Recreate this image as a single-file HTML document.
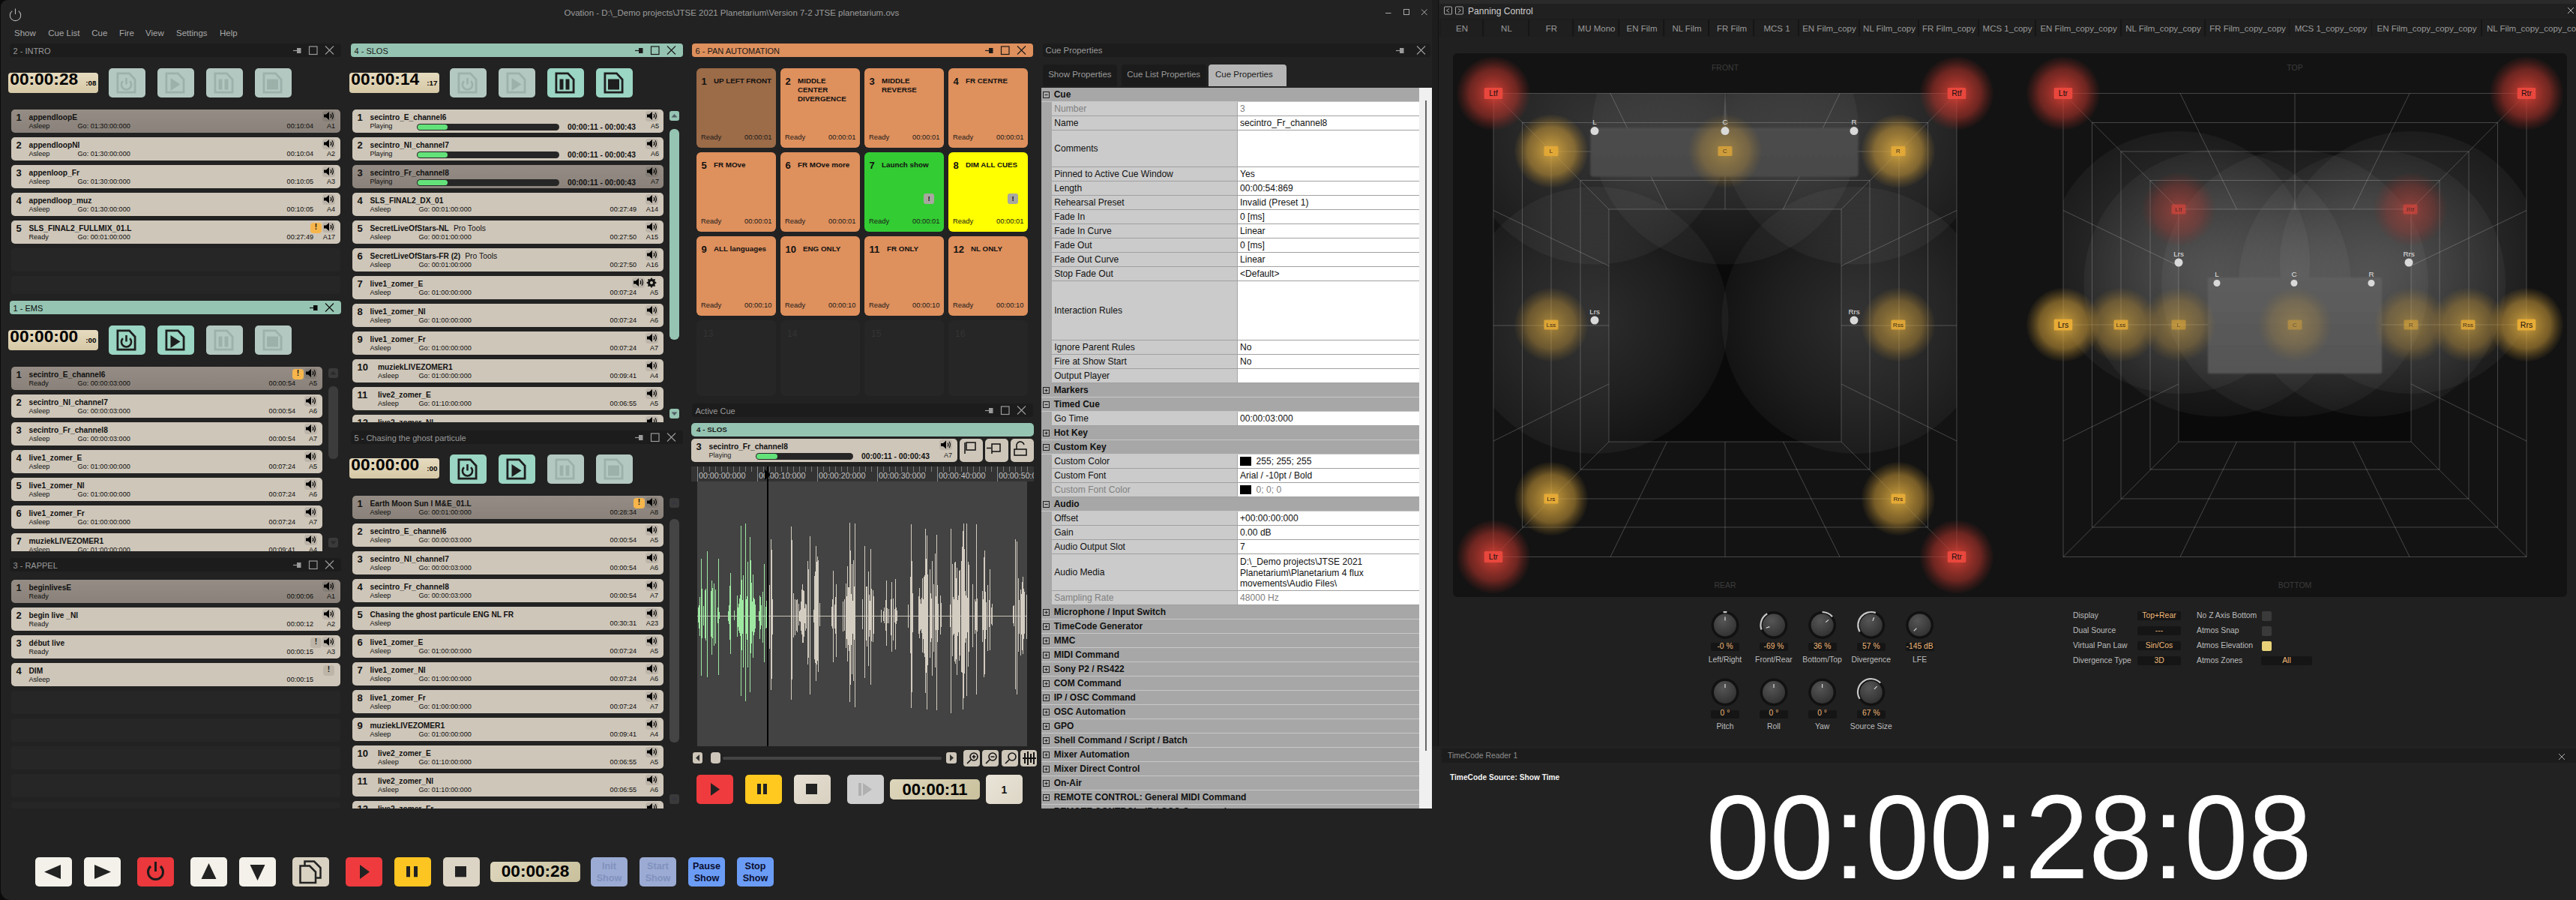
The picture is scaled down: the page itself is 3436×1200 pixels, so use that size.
<!DOCTYPE html><html><head><meta charset="utf-8"><style>
html,body{margin:0;padding:0;}
body{width:3436px;height:1200px;position:relative;overflow:hidden;background:#0b0b0b;font-family:"Liberation Sans",sans-serif;}
div,svg{position:absolute;}
.t{white-space:nowrap;}
</style></head><body>
<div style="left:1px;top:0;width:1918px;height:1200px;background:#222222;border-radius:9px 0 0 13px;"></div>
<div style="left:1910px;top:0;width:1526px;height:1200px;background:#222222;"></div>
<div style="left:1910px;top:0;width:9px;height:995px;background:#1d1d1d;"></div>
<div style="left:1918px;top:0;width:1px;height:995px;background:#121212;"></div>
<div style="left:1919px;top:0;width:1517px;height:995px;background:#202020;"></div>
<div style="left:13px;top:58px;width:442px;height:18px;background:#1c1c1c;border-radius:4px;"></div><div class="t" style="left:17.5px;top:62.8px;line-height:11.00px;font-size:11.00px;color:#9a9a9a;">2 - INTRO</div><div style="left:11px;top:97px;width:120px;height:27px;background:linear-gradient(#e6dbbf,#d5c8a6);border-radius:4px;"></div><div class="t" style="left:13.3px;top:94.1px;line-height:22.70px;font-size:22.70px;font-weight:700;color:#000;">00:00:28</div><div class="t" style="right:3307.5px;top:105.7px;line-height:9.80px;font-size:9.80px;font-weight:700;color:#000;">:08</div><div style="left:145px;top:91px;width:49px;height:39px;background:#b4c8c2;border-radius:5px;"></div><div style="left:210px;top:91px;width:49px;height:39px;background:#b4c8c2;border-radius:5px;"></div><div style="left:275px;top:91px;width:49px;height:39px;background:#b4c8c2;border-radius:5px;"></div><div style="left:340px;top:91px;width:49px;height:39px;background:#b4c8c2;border-radius:5px;"></div><div style="left:15px;top:146px;width:439px;height:31px;background:linear-gradient(#958d85,#8a827a);border-radius:5px;"></div><div class="t" style="left:21.5px;top:149.9px;line-height:13.00px;font-size:13.00px;font-weight:700;color:#111;">1</div><div class="t" style="left:38.5px;top:151.8px;line-height:10.20px;font-size:10.20px;font-weight:700;color:#111;">appendloopE</div><div class="t" style="left:38.5px;top:164.3px;line-height:9.10px;font-size:9.10px;color:#0c0c0c;">Asleep</div><div class="t" style="left:103.5px;top:164.3px;line-height:9.10px;font-size:9.10px;color:#0c0c0c;">Go: 01:30:00:000</div><div class="t" style="right:3018.0px;top:164.3px;line-height:9.10px;font-size:9.10px;color:#0c0c0c;">00:10:04</div><div class="t" style="right:2989.0px;top:164.3px;line-height:9.10px;font-size:9.10px;color:#0c0c0c;">A1</div><div style="left:430px;top:147.5px;width:17px;height:14px;background:rgba(0,0,0,0.085);border-radius:4px;"></div><div style="left:15px;top:183px;width:439px;height:31px;background:#cec6b9;border-radius:5px;"></div><div class="t" style="left:21.5px;top:186.9px;line-height:13.00px;font-size:13.00px;font-weight:700;color:#111;">2</div><div class="t" style="left:38.5px;top:188.8px;line-height:10.20px;font-size:10.20px;font-weight:700;color:#111;">appendloopNl</div><div class="t" style="left:38.5px;top:201.3px;line-height:9.10px;font-size:9.10px;color:#0c0c0c;">Asleep</div><div class="t" style="left:103.5px;top:201.3px;line-height:9.10px;font-size:9.10px;color:#0c0c0c;">Go: 01:30:00:000</div><div class="t" style="right:3018.0px;top:201.3px;line-height:9.10px;font-size:9.10px;color:#0c0c0c;">00:10:04</div><div class="t" style="right:2989.0px;top:201.3px;line-height:9.10px;font-size:9.10px;color:#0c0c0c;">A2</div><div style="left:430px;top:184.5px;width:17px;height:14px;background:rgba(0,0,0,0.085);border-radius:4px;"></div><div style="left:15px;top:220px;width:439px;height:31px;background:#cec6b9;border-radius:5px;"></div><div class="t" style="left:21.5px;top:223.9px;line-height:13.00px;font-size:13.00px;font-weight:700;color:#111;">3</div><div class="t" style="left:38.5px;top:225.8px;line-height:10.20px;font-size:10.20px;font-weight:700;color:#111;">appenloop_Fr</div><div class="t" style="left:38.5px;top:238.3px;line-height:9.10px;font-size:9.10px;color:#0c0c0c;">Asleep</div><div class="t" style="left:103.5px;top:238.3px;line-height:9.10px;font-size:9.10px;color:#0c0c0c;">Go: 01:30:00:000</div><div class="t" style="right:3018.0px;top:238.3px;line-height:9.10px;font-size:9.10px;color:#0c0c0c;">00:10:05</div><div class="t" style="right:2989.0px;top:238.3px;line-height:9.10px;font-size:9.10px;color:#0c0c0c;">A3</div><div style="left:430px;top:221.5px;width:17px;height:14px;background:rgba(0,0,0,0.085);border-radius:4px;"></div><div style="left:15px;top:257px;width:439px;height:31px;background:#cec6b9;border-radius:5px;"></div><div class="t" style="left:21.5px;top:260.9px;line-height:13.00px;font-size:13.00px;font-weight:700;color:#111;">4</div><div class="t" style="left:38.5px;top:262.8px;line-height:10.20px;font-size:10.20px;font-weight:700;color:#111;">appendloop_muz</div><div class="t" style="left:38.5px;top:275.3px;line-height:9.10px;font-size:9.10px;color:#0c0c0c;">Asleep</div><div class="t" style="left:103.5px;top:275.3px;line-height:9.10px;font-size:9.10px;color:#0c0c0c;">Go: 01:30:00:000</div><div class="t" style="right:3018.0px;top:275.3px;line-height:9.10px;font-size:9.10px;color:#0c0c0c;">00:10:05</div><div class="t" style="right:2989.0px;top:275.3px;line-height:9.10px;font-size:9.10px;color:#0c0c0c;">A4</div><div style="left:430px;top:258.5px;width:17px;height:14px;background:rgba(0,0,0,0.085);border-radius:4px;"></div><div style="left:15px;top:294px;width:439px;height:31px;background:#cec6b9;border-radius:5px;"></div><div class="t" style="left:21.5px;top:297.9px;line-height:13.00px;font-size:13.00px;font-weight:700;color:#111;">5</div><div class="t" style="left:38.5px;top:299.8px;line-height:10.20px;font-size:10.20px;font-weight:700;color:#111;">SLS_FINAL2_FULLMIX_01.L</div><div class="t" style="left:38.5px;top:312.3px;line-height:9.10px;font-size:9.10px;color:#0c0c0c;">Ready</div><div class="t" style="left:103.5px;top:312.3px;line-height:9.10px;font-size:9.10px;color:#0c0c0c;">Go: 00:01:00:000</div><div class="t" style="right:3018.0px;top:312.3px;line-height:9.10px;font-size:9.10px;color:#0c0c0c;">00:27:49</div><div class="t" style="right:2989.0px;top:312.3px;line-height:9.10px;font-size:9.10px;color:#0c0c0c;">A17</div><div style="left:430px;top:295.5px;width:17px;height:14px;background:rgba(0,0,0,0.085);border-radius:4px;"></div><div style="left:414px;top:296.5px;width:15px;height:14px;background:#f7b64c;border-radius:4px;"></div><div class="t" style="left:419.8px;top:298.1px;line-height:10.00px;font-size:10.00px;font-weight:700;color:#111;">!</div><div style="left:15px;top:331px;width:439px;height:31px;background:#262626;border-radius:4px;"></div><div style="left:15px;top:368px;width:439px;height:24px;background:#262626;border-radius:4px;"></div><div style="left:13px;top:401px;width:442px;height:18px;background:#95c4b2;border-radius:4px;"></div><div class="t" style="left:17.5px;top:405.8px;line-height:11.00px;font-size:11.00px;color:#0c0c0c;">1 - EMS</div><div style="left:11px;top:440px;width:120px;height:27px;background:linear-gradient(#e6dbbf,#d5c8a6);border-radius:4px;"></div><div class="t" style="left:13.3px;top:437.1px;line-height:22.70px;font-size:22.70px;font-weight:700;color:#000;">00:00:00</div><div class="t" style="right:3307.5px;top:448.7px;line-height:9.80px;font-size:9.80px;font-weight:700;color:#000;">:00</div><div style="left:145px;top:434px;width:49px;height:39px;background:#9bd5c3;border-radius:5px;"></div><div style="left:210px;top:434px;width:49px;height:39px;background:#9bd5c3;border-radius:5px;"></div><div style="left:275px;top:434px;width:49px;height:39px;background:#b4c8c2;border-radius:5px;"></div><div style="left:340px;top:434px;width:49px;height:39px;background:#b4c8c2;border-radius:5px;"></div><div style="left:0;top:0;width:3436px;height:1200px;clip-path:inset(480px 2976px 465px 0px);"><div style="left:15px;top:489px;width:415px;height:31px;background:linear-gradient(#958d85,#8a827a);border-radius:5px;"></div><div class="t" style="left:21.5px;top:492.9px;line-height:13.00px;font-size:13.00px;font-weight:700;color:#111;">1</div><div class="t" style="left:38.5px;top:494.8px;line-height:10.20px;font-size:10.20px;font-weight:700;color:#111;">secintro_E_channel6</div><div class="t" style="left:38.5px;top:507.3px;line-height:9.10px;font-size:9.10px;color:#0c0c0c;">Ready</div><div class="t" style="left:103.5px;top:507.3px;line-height:9.10px;font-size:9.10px;color:#0c0c0c;">Go: 00:00:03:000</div><div class="t" style="right:3042.0px;top:507.3px;line-height:9.10px;font-size:9.10px;color:#0c0c0c;">00:00:54</div><div class="t" style="right:3013.0px;top:507.3px;line-height:9.10px;font-size:9.10px;color:#0c0c0c;">A5</div><div style="left:406px;top:490.5px;width:17px;height:14px;background:rgba(0,0,0,0.085);border-radius:4px;"></div><div style="left:390px;top:491.5px;width:15px;height:14px;background:#f7b64c;border-radius:4px;"></div><div class="t" style="left:395.8px;top:493.1px;line-height:10.00px;font-size:10.00px;font-weight:700;color:#111;">!</div><div style="left:15px;top:526px;width:415px;height:31px;background:#cec6b9;border-radius:5px;"></div><div class="t" style="left:21.5px;top:529.9px;line-height:13.00px;font-size:13.00px;font-weight:700;color:#111;">2</div><div class="t" style="left:38.5px;top:531.8px;line-height:10.20px;font-size:10.20px;font-weight:700;color:#111;">secintro_Nl_channel7</div><div class="t" style="left:38.5px;top:544.3px;line-height:9.10px;font-size:9.10px;color:#0c0c0c;">Asleep</div><div class="t" style="left:103.5px;top:544.3px;line-height:9.10px;font-size:9.10px;color:#0c0c0c;">Go: 00:00:03:000</div><div class="t" style="right:3042.0px;top:544.3px;line-height:9.10px;font-size:9.10px;color:#0c0c0c;">00:00:54</div><div class="t" style="right:3013.0px;top:544.3px;line-height:9.10px;font-size:9.10px;color:#0c0c0c;">A6</div><div style="left:406px;top:527.5px;width:17px;height:14px;background:rgba(0,0,0,0.085);border-radius:4px;"></div><div style="left:15px;top:563px;width:415px;height:31px;background:#cec6b9;border-radius:5px;"></div><div class="t" style="left:21.5px;top:566.9px;line-height:13.00px;font-size:13.00px;font-weight:700;color:#111;">3</div><div class="t" style="left:38.5px;top:568.8px;line-height:10.20px;font-size:10.20px;font-weight:700;color:#111;">secintro_Fr_channel8</div><div class="t" style="left:38.5px;top:581.3px;line-height:9.10px;font-size:9.10px;color:#0c0c0c;">Asleep</div><div class="t" style="left:103.5px;top:581.3px;line-height:9.10px;font-size:9.10px;color:#0c0c0c;">Go: 00:00:03:000</div><div class="t" style="right:3042.0px;top:581.3px;line-height:9.10px;font-size:9.10px;color:#0c0c0c;">00:00:54</div><div class="t" style="right:3013.0px;top:581.3px;line-height:9.10px;font-size:9.10px;color:#0c0c0c;">A7</div><div style="left:406px;top:564.5px;width:17px;height:14px;background:rgba(0,0,0,0.085);border-radius:4px;"></div><div style="left:15px;top:600px;width:415px;height:31px;background:#cec6b9;border-radius:5px;"></div><div class="t" style="left:21.5px;top:603.9px;line-height:13.00px;font-size:13.00px;font-weight:700;color:#111;">4</div><div class="t" style="left:38.5px;top:605.8px;line-height:10.20px;font-size:10.20px;font-weight:700;color:#111;">live1_zomer_E</div><div class="t" style="left:38.5px;top:618.3px;line-height:9.10px;font-size:9.10px;color:#0c0c0c;">Asleep</div><div class="t" style="left:103.5px;top:618.3px;line-height:9.10px;font-size:9.10px;color:#0c0c0c;">Go: 01:00:00:000</div><div class="t" style="right:3042.0px;top:618.3px;line-height:9.10px;font-size:9.10px;color:#0c0c0c;">00:07:24</div><div class="t" style="right:3013.0px;top:618.3px;line-height:9.10px;font-size:9.10px;color:#0c0c0c;">A5</div><div style="left:406px;top:601.5px;width:17px;height:14px;background:rgba(0,0,0,0.085);border-radius:4px;"></div><div style="left:15px;top:637px;width:415px;height:31px;background:#cec6b9;border-radius:5px;"></div><div class="t" style="left:21.5px;top:640.9px;line-height:13.00px;font-size:13.00px;font-weight:700;color:#111;">5</div><div class="t" style="left:38.5px;top:642.8px;line-height:10.20px;font-size:10.20px;font-weight:700;color:#111;">live1_zomer_Nl</div><div class="t" style="left:38.5px;top:655.3px;line-height:9.10px;font-size:9.10px;color:#0c0c0c;">Asleep</div><div class="t" style="left:103.5px;top:655.3px;line-height:9.10px;font-size:9.10px;color:#0c0c0c;">Go: 01:00:00:000</div><div class="t" style="right:3042.0px;top:655.3px;line-height:9.10px;font-size:9.10px;color:#0c0c0c;">00:07:24</div><div class="t" style="right:3013.0px;top:655.3px;line-height:9.10px;font-size:9.10px;color:#0c0c0c;">A6</div><div style="left:406px;top:638.5px;width:17px;height:14px;background:rgba(0,0,0,0.085);border-radius:4px;"></div><div style="left:15px;top:674px;width:415px;height:31px;background:#cec6b9;border-radius:5px;"></div><div class="t" style="left:21.5px;top:677.9px;line-height:13.00px;font-size:13.00px;font-weight:700;color:#111;">6</div><div class="t" style="left:38.5px;top:679.8px;line-height:10.20px;font-size:10.20px;font-weight:700;color:#111;">live1_zomer_Fr</div><div class="t" style="left:38.5px;top:692.3px;line-height:9.10px;font-size:9.10px;color:#0c0c0c;">Asleep</div><div class="t" style="left:103.5px;top:692.3px;line-height:9.10px;font-size:9.10px;color:#0c0c0c;">Go: 01:00:00:000</div><div class="t" style="right:3042.0px;top:692.3px;line-height:9.10px;font-size:9.10px;color:#0c0c0c;">00:07:24</div><div class="t" style="right:3013.0px;top:692.3px;line-height:9.10px;font-size:9.10px;color:#0c0c0c;">A7</div><div style="left:406px;top:675.5px;width:17px;height:14px;background:rgba(0,0,0,0.085);border-radius:4px;"></div><div style="left:15px;top:711px;width:415px;height:24px;background:#cec6b9;border-radius:5px 5px 0 0;"></div><div class="t" style="left:21.5px;top:714.9px;line-height:13.00px;font-size:13.00px;font-weight:700;color:#111;">7</div><div class="t" style="left:38.5px;top:716.8px;line-height:10.20px;font-size:10.20px;font-weight:700;color:#111;">muziekLIVEZOMER1</div><div class="t" style="left:38.5px;top:729.3px;line-height:9.10px;font-size:9.10px;color:#0c0c0c;">Asleep</div><div class="t" style="left:103.5px;top:729.3px;line-height:9.10px;font-size:9.10px;color:#0c0c0c;">Go: 01:00:00:000</div><div class="t" style="right:3042.0px;top:729.3px;line-height:9.10px;font-size:9.10px;color:#0c0c0c;">00:09:41</div><div class="t" style="right:3013.0px;top:729.3px;line-height:9.10px;font-size:9.10px;color:#0c0c0c;">A4</div><div style="left:406px;top:712.5px;width:17px;height:14px;background:rgba(0,0,0,0.085);border-radius:4px;"></div></div><div style="left:438px;top:491px;width:13px;height:13px;background:#3a3a3a;border-radius:3px;"></div><div style="left:438px;top:717px;width:13px;height:13px;background:#3a3a3a;border-radius:3px;"></div><div style="left:438px;top:515px;width:13px;height:97px;background:#3c3c3c;border-radius:6px;"></div><div style="left:13px;top:744px;width:442px;height:18px;background:#1c1c1c;border-radius:4px;"></div><div class="t" style="left:17.5px;top:748.8px;line-height:11.00px;font-size:11.00px;color:#9a9a9a;">3 - RAPPEL</div><div style="left:15px;top:773px;width:439px;height:31px;background:linear-gradient(#958d85,#8a827a);border-radius:5px;"></div><div class="t" style="left:21.5px;top:776.9px;line-height:13.00px;font-size:13.00px;font-weight:700;color:#111;">1</div><div class="t" style="left:38.5px;top:778.8px;line-height:10.20px;font-size:10.20px;font-weight:700;color:#111;">beginlivesE</div><div class="t" style="left:38.5px;top:791.3px;line-height:9.10px;font-size:9.10px;color:#0c0c0c;">Ready</div><div class="t" style="right:3018.0px;top:791.3px;line-height:9.10px;font-size:9.10px;color:#0c0c0c;">00:00:06</div><div class="t" style="right:2989.0px;top:791.3px;line-height:9.10px;font-size:9.10px;color:#0c0c0c;">A1</div><div style="left:430px;top:774.5px;width:17px;height:14px;background:rgba(0,0,0,0.085);border-radius:4px;"></div><div style="left:15px;top:810px;width:439px;height:31px;background:#cec6b9;border-radius:5px;"></div><div class="t" style="left:21.5px;top:813.9px;line-height:13.00px;font-size:13.00px;font-weight:700;color:#111;">2</div><div class="t" style="left:38.5px;top:815.8px;line-height:10.20px;font-size:10.20px;font-weight:700;color:#111;">begin live _Nl</div><div class="t" style="left:38.5px;top:828.3px;line-height:9.10px;font-size:9.10px;color:#0c0c0c;">Ready</div><div class="t" style="right:3018.0px;top:828.3px;line-height:9.10px;font-size:9.10px;color:#0c0c0c;">00:00:12</div><div class="t" style="right:2989.0px;top:828.3px;line-height:9.10px;font-size:9.10px;color:#0c0c0c;">A2</div><div style="left:430px;top:811.5px;width:17px;height:14px;background:rgba(0,0,0,0.085);border-radius:4px;"></div><div style="left:15px;top:847px;width:439px;height:31px;background:#cec6b9;border-radius:5px;"></div><div class="t" style="left:21.5px;top:850.9px;line-height:13.00px;font-size:13.00px;font-weight:700;color:#111;">3</div><div class="t" style="left:38.5px;top:852.8px;line-height:10.20px;font-size:10.20px;font-weight:700;color:#111;">début live</div><div class="t" style="left:38.5px;top:865.3px;line-height:9.10px;font-size:9.10px;color:#0c0c0c;">Ready</div><div class="t" style="right:3018.0px;top:865.3px;line-height:9.10px;font-size:9.10px;color:#0c0c0c;">00:00:15</div><div class="t" style="right:2989.0px;top:865.3px;line-height:9.10px;font-size:9.10px;color:#0c0c0c;">A3</div><div style="left:430px;top:848.5px;width:17px;height:14px;background:rgba(0,0,0,0.085);border-radius:4px;"></div><div style="left:414px;top:849.5px;width:15px;height:14px;background:#bdb5a8;border-radius:4px;"></div><div class="t" style="left:419.8px;top:851.1px;line-height:10.00px;font-size:10.00px;font-weight:700;color:#111;">!</div><div style="left:15px;top:884px;width:439px;height:31px;background:#cec6b9;border-radius:5px;"></div><div class="t" style="left:21.5px;top:887.9px;line-height:13.00px;font-size:13.00px;font-weight:700;color:#111;">4</div><div class="t" style="left:38.5px;top:889.8px;line-height:10.20px;font-size:10.20px;font-weight:700;color:#111;">DIM</div><div class="t" style="left:38.5px;top:902.3px;line-height:9.10px;font-size:9.10px;color:#0c0c0c;">Asleep</div><div class="t" style="right:3018.0px;top:902.3px;line-height:9.10px;font-size:9.10px;color:#0c0c0c;">00:00:15</div><div class="t" style="right:2989.0px;top:902.3px;line-height:9.10px;font-size:9.10px;color:#0c0c0c;"></div><div style="left:431px;top:886.5px;width:15px;height:14px;background:#bdb5a8;border-radius:4px;"></div><div class="t" style="left:436.8px;top:888.1px;line-height:10.00px;font-size:10.00px;font-weight:700;color:#111;">!</div><div style="left:15px;top:921px;width:439px;height:31px;background:#262626;border-radius:4px;"></div><div style="left:15px;top:958px;width:439px;height:31px;background:#262626;border-radius:4px;"></div><div style="left:15px;top:995px;width:439px;height:31px;background:#262626;border-radius:4px;"></div><div style="left:15px;top:1032px;width:439px;height:31px;background:#262626;border-radius:4px;"></div><div style="left:15px;top:1069px;width:439px;height:9px;background:#262626;border-radius:4px;"></div><div style="left:468px;top:58px;width:443px;height:18px;background:#95c4b2;border-radius:4px;"></div><div class="t" style="left:472.5px;top:62.8px;line-height:11.00px;font-size:11.00px;color:#1a1a1a;">4 - SLOS</div><div style="left:466px;top:97px;width:120px;height:27px;background:linear-gradient(#e6dbbf,#d5c8a6);border-radius:4px;"></div><div class="t" style="left:468.3px;top:94.1px;line-height:22.70px;font-size:22.70px;font-weight:700;color:#000;">00:00:14</div><div class="t" style="right:2852.5px;top:105.7px;line-height:9.80px;font-size:9.80px;font-weight:700;color:#000;">:17</div><div style="left:600px;top:91px;width:49px;height:39px;background:#b4c8c2;border-radius:5px;"></div><div style="left:665px;top:91px;width:49px;height:39px;background:#b4c8c2;border-radius:5px;"></div><div style="left:730px;top:91px;width:49px;height:39px;background:#9bd5c3;border-radius:5px;"></div><div style="left:795px;top:91px;width:49px;height:39px;background:#9bd5c3;border-radius:5px;"></div><div style="left:0;top:0;width:3436px;height:1200px;clip-path:inset(140px 2544px 637px 460px);"><div style="left:470px;top:146px;width:415px;height:31px;background:#cec6b9;border-radius:5px;"></div><div class="t" style="left:476.5px;top:149.9px;line-height:13.00px;font-size:13.00px;font-weight:700;color:#111;">1</div><div class="t" style="left:493.5px;top:151.8px;line-height:10.20px;font-size:10.20px;font-weight:700;color:#111;">secintro_E_channel6</div><div class="t" style="left:493.5px;top:164.3px;line-height:9.10px;font-size:9.10px;color:#0c0c0c;">Playing</div><div style="left:556px;top:164.5px;width:190px;height:9.5px;background:#262626;border-radius:5px;"></div><div style="left:557px;top:165.5px;width:40px;height:7.5px;background:#63e27a;border-radius:4px;"></div><div class="t" style="right:2588.0px;top:165.0px;line-height:10.30px;font-size:10.30px;font-weight:700;color:#111;">00:00:11 - 00:00:43</div><div class="t" style="right:2557.0px;top:163.6px;line-height:9.00px;font-size:9.00px;color:#0c0c0c;">A5</div><div style="left:861px;top:147.5px;width:17px;height:14px;background:rgba(0,0,0,0.085);border-radius:4px;"></div><div style="left:470px;top:183px;width:415px;height:31px;background:#cec6b9;border-radius:5px;"></div><div class="t" style="left:476.5px;top:186.9px;line-height:13.00px;font-size:13.00px;font-weight:700;color:#111;">2</div><div class="t" style="left:493.5px;top:188.8px;line-height:10.20px;font-size:10.20px;font-weight:700;color:#111;">secintro_Nl_channel7</div><div class="t" style="left:493.5px;top:201.3px;line-height:9.10px;font-size:9.10px;color:#0c0c0c;">Playing</div><div style="left:556px;top:201.5px;width:190px;height:9.5px;background:#262626;border-radius:5px;"></div><div style="left:557px;top:202.5px;width:40px;height:7.5px;background:#63e27a;border-radius:4px;"></div><div class="t" style="right:2588.0px;top:202.0px;line-height:10.30px;font-size:10.30px;font-weight:700;color:#111;">00:00:11 - 00:00:43</div><div class="t" style="right:2557.0px;top:200.6px;line-height:9.00px;font-size:9.00px;color:#0c0c0c;">A6</div><div style="left:861px;top:184.5px;width:17px;height:14px;background:rgba(0,0,0,0.085);border-radius:4px;"></div><div style="left:470px;top:220px;width:415px;height:31px;background:linear-gradient(#958d85,#8a827a);border-radius:5px;"></div><div class="t" style="left:476.5px;top:223.9px;line-height:13.00px;font-size:13.00px;font-weight:700;color:#111;">3</div><div class="t" style="left:493.5px;top:225.8px;line-height:10.20px;font-size:10.20px;font-weight:700;color:#111;">secintro_Fr_channel8</div><div class="t" style="left:493.5px;top:238.3px;line-height:9.10px;font-size:9.10px;color:#0c0c0c;">Playing</div><div style="left:556px;top:238.5px;width:190px;height:9.5px;background:#262626;border-radius:5px;"></div><div style="left:557px;top:239.5px;width:40px;height:7.5px;background:#63e27a;border-radius:4px;"></div><div class="t" style="right:2588.0px;top:239.0px;line-height:10.30px;font-size:10.30px;font-weight:700;color:#111;">00:00:11 - 00:00:43</div><div class="t" style="right:2557.0px;top:237.6px;line-height:9.00px;font-size:9.00px;color:#0c0c0c;">A7</div><div style="left:861px;top:221.5px;width:17px;height:14px;background:rgba(0,0,0,0.085);border-radius:4px;"></div><div style="left:470px;top:257px;width:415px;height:31px;background:#cec6b9;border-radius:5px;"></div><div class="t" style="left:476.5px;top:260.9px;line-height:13.00px;font-size:13.00px;font-weight:700;color:#111;">4</div><div class="t" style="left:493.5px;top:262.8px;line-height:10.20px;font-size:10.20px;font-weight:700;color:#111;">SLS_FINAL2_DX_01</div><div class="t" style="left:493.5px;top:275.3px;line-height:9.10px;font-size:9.10px;color:#0c0c0c;">Asleep</div><div class="t" style="left:558.5px;top:275.3px;line-height:9.10px;font-size:9.10px;color:#0c0c0c;">Go: 00:01:00:000</div><div class="t" style="right:2587.0px;top:275.3px;line-height:9.10px;font-size:9.10px;color:#0c0c0c;">00:27:49</div><div class="t" style="right:2558.0px;top:275.3px;line-height:9.10px;font-size:9.10px;color:#0c0c0c;">A14</div><div style="left:861px;top:258.5px;width:17px;height:14px;background:rgba(0,0,0,0.085);border-radius:4px;"></div><div style="left:470px;top:294px;width:415px;height:31px;background:#cec6b9;border-radius:5px;"></div><div class="t" style="left:476.5px;top:297.9px;line-height:13.00px;font-size:13.00px;font-weight:700;color:#111;">5</div><div class="t" style="left:493.5px;top:299.8px;line-height:10.20px;font-size:10.20px;font-weight:700;color:#111;">SecretLiveOfStars-NL</div><div class="t" style="left:604.9px;top:299.7px;line-height:10.40px;font-size:10.40px;color:#111;">Pro Tools</div><div class="t" style="left:493.5px;top:312.3px;line-height:9.10px;font-size:9.10px;color:#0c0c0c;">Asleep</div><div class="t" style="left:558.5px;top:312.3px;line-height:9.10px;font-size:9.10px;color:#0c0c0c;">Go: 00:01:00:000</div><div class="t" style="right:2587.0px;top:312.3px;line-height:9.10px;font-size:9.10px;color:#0c0c0c;">00:27:50</div><div class="t" style="right:2558.0px;top:312.3px;line-height:9.10px;font-size:9.10px;color:#0c0c0c;">A15</div><div style="left:861px;top:295.5px;width:17px;height:14px;background:rgba(0,0,0,0.085);border-radius:4px;"></div><div style="left:470px;top:331px;width:415px;height:31px;background:#cec6b9;border-radius:5px;"></div><div class="t" style="left:476.5px;top:334.9px;line-height:13.00px;font-size:13.00px;font-weight:700;color:#111;">6</div><div class="t" style="left:493.5px;top:336.8px;line-height:10.20px;font-size:10.20px;font-weight:700;color:#111;">SecretLiveOfStars-FR (2)</div><div class="t" style="left:620.2px;top:336.7px;line-height:10.40px;font-size:10.40px;color:#111;">Pro Tools</div><div class="t" style="left:493.5px;top:349.3px;line-height:9.10px;font-size:9.10px;color:#0c0c0c;">Asleep</div><div class="t" style="left:558.5px;top:349.3px;line-height:9.10px;font-size:9.10px;color:#0c0c0c;">Go: 00:01:00:000</div><div class="t" style="right:2587.0px;top:349.3px;line-height:9.10px;font-size:9.10px;color:#0c0c0c;">00:27:50</div><div class="t" style="right:2558.0px;top:349.3px;line-height:9.10px;font-size:9.10px;color:#0c0c0c;">A16</div><div style="left:861px;top:332.5px;width:17px;height:14px;background:rgba(0,0,0,0.085);border-radius:4px;"></div><div style="left:470px;top:368px;width:415px;height:31px;background:#cec6b9;border-radius:5px;"></div><div class="t" style="left:476.5px;top:371.9px;line-height:13.00px;font-size:13.00px;font-weight:700;color:#111;">7</div><div class="t" style="left:493.5px;top:373.8px;line-height:10.20px;font-size:10.20px;font-weight:700;color:#111;">live1_zomer_E</div><div class="t" style="left:493.5px;top:386.3px;line-height:9.10px;font-size:9.10px;color:#0c0c0c;">Asleep</div><div class="t" style="left:558.5px;top:386.3px;line-height:9.10px;font-size:9.10px;color:#0c0c0c;">Go: 01:00:00:000</div><div class="t" style="right:2587.0px;top:386.3px;line-height:9.10px;font-size:9.10px;color:#0c0c0c;">00:07:24</div><div class="t" style="right:2558.0px;top:386.3px;line-height:9.10px;font-size:9.10px;color:#0c0c0c;">A5</div><div style="left:843px;top:369.5px;width:17px;height:14px;background:rgba(0,0,0,0.085);border-radius:4px;"></div><div style="left:470px;top:405px;width:415px;height:31px;background:#cec6b9;border-radius:5px;"></div><div class="t" style="left:476.5px;top:408.9px;line-height:13.00px;font-size:13.00px;font-weight:700;color:#111;">8</div><div class="t" style="left:493.5px;top:410.8px;line-height:10.20px;font-size:10.20px;font-weight:700;color:#111;">live1_zomer_Nl</div><div class="t" style="left:493.5px;top:423.3px;line-height:9.10px;font-size:9.10px;color:#0c0c0c;">Asleep</div><div class="t" style="left:558.5px;top:423.3px;line-height:9.10px;font-size:9.10px;color:#0c0c0c;">Go: 01:00:00:000</div><div class="t" style="right:2587.0px;top:423.3px;line-height:9.10px;font-size:9.10px;color:#0c0c0c;">00:07:24</div><div class="t" style="right:2558.0px;top:423.3px;line-height:9.10px;font-size:9.10px;color:#0c0c0c;">A6</div><div style="left:861px;top:406.5px;width:17px;height:14px;background:rgba(0,0,0,0.085);border-radius:4px;"></div><div style="left:470px;top:442px;width:415px;height:31px;background:#cec6b9;border-radius:5px;"></div><div class="t" style="left:476.5px;top:445.9px;line-height:13.00px;font-size:13.00px;font-weight:700;color:#111;">9</div><div class="t" style="left:493.5px;top:447.8px;line-height:10.20px;font-size:10.20px;font-weight:700;color:#111;">live1_zomer_Fr</div><div class="t" style="left:493.5px;top:460.3px;line-height:9.10px;font-size:9.10px;color:#0c0c0c;">Asleep</div><div class="t" style="left:558.5px;top:460.3px;line-height:9.10px;font-size:9.10px;color:#0c0c0c;">Go: 01:00:00:000</div><div class="t" style="right:2587.0px;top:460.3px;line-height:9.10px;font-size:9.10px;color:#0c0c0c;">00:07:24</div><div class="t" style="right:2558.0px;top:460.3px;line-height:9.10px;font-size:9.10px;color:#0c0c0c;">A7</div><div style="left:861px;top:443.5px;width:17px;height:14px;background:rgba(0,0,0,0.085);border-radius:4px;"></div><div style="left:470px;top:479px;width:415px;height:31px;background:#cec6b9;border-radius:5px;"></div><div class="t" style="left:476.5px;top:482.9px;line-height:13.00px;font-size:13.00px;font-weight:700;color:#111;">10</div><div class="t" style="left:504.0px;top:484.8px;line-height:10.20px;font-size:10.20px;font-weight:700;color:#111;">muziekLIVEZOMER1</div><div class="t" style="left:504.0px;top:497.3px;line-height:9.10px;font-size:9.10px;color:#0c0c0c;">Asleep</div><div class="t" style="left:558.5px;top:497.3px;line-height:9.10px;font-size:9.10px;color:#0c0c0c;">Go: 01:00:00:000</div><div class="t" style="right:2587.0px;top:497.3px;line-height:9.10px;font-size:9.10px;color:#0c0c0c;">00:09:41</div><div class="t" style="right:2558.0px;top:497.3px;line-height:9.10px;font-size:9.10px;color:#0c0c0c;">A4</div><div style="left:861px;top:480.5px;width:17px;height:14px;background:rgba(0,0,0,0.085);border-radius:4px;"></div><div style="left:470px;top:516px;width:415px;height:31px;background:#cec6b9;border-radius:5px;"></div><div class="t" style="left:476.5px;top:519.9px;line-height:13.00px;font-size:13.00px;font-weight:700;color:#111;">11</div><div class="t" style="left:504.0px;top:521.8px;line-height:10.20px;font-size:10.20px;font-weight:700;color:#111;">live2_zomer_E</div><div class="t" style="left:504.0px;top:534.3px;line-height:9.10px;font-size:9.10px;color:#0c0c0c;">Asleep</div><div class="t" style="left:558.5px;top:534.3px;line-height:9.10px;font-size:9.10px;color:#0c0c0c;">Go: 01:10:00:000</div><div class="t" style="right:2587.0px;top:534.3px;line-height:9.10px;font-size:9.10px;color:#0c0c0c;">00:06:55</div><div class="t" style="right:2558.0px;top:534.3px;line-height:9.10px;font-size:9.10px;color:#0c0c0c;">A5</div><div style="left:861px;top:517.5px;width:17px;height:14px;background:rgba(0,0,0,0.085);border-radius:4px;"></div><div style="left:470px;top:553px;width:415px;height:10px;background:#cec6b9;border-radius:5px 5px 0 0;"></div><div class="t" style="left:476.5px;top:556.9px;line-height:13.00px;font-size:13.00px;font-weight:700;color:#111;">12</div><div class="t" style="left:504.0px;top:558.8px;line-height:10.20px;font-size:10.20px;font-weight:700;color:#111;">live2_zomer_Nl</div><div class="t" style="left:504.0px;top:571.3px;line-height:9.10px;font-size:9.10px;color:#0c0c0c;">Asleep</div><div class="t" style="left:558.5px;top:571.3px;line-height:9.10px;font-size:9.10px;color:#0c0c0c;">Go: 01:10:00:000</div><div class="t" style="right:2587.0px;top:571.3px;line-height:9.10px;font-size:9.10px;color:#0c0c0c;">00:06:55</div><div class="t" style="right:2558.0px;top:571.3px;line-height:9.10px;font-size:9.10px;color:#0c0c0c;">A6</div><div style="left:861px;top:554.5px;width:17px;height:14px;background:rgba(0,0,0,0.085);border-radius:4px;"></div></div><div style="left:893px;top:148px;width:13px;height:13px;background:#95c4b2;border-radius:3px;"></div><div style="left:893px;top:545px;width:13px;height:13px;background:#95c4b2;border-radius:3px;"></div><div style="left:893px;top:172px;width:13px;height:281px;background:#95c4b2;border-radius:6px;"></div><div style="left:468px;top:574px;width:443px;height:18px;background:#1c1c1c;border-radius:4px;"></div><div class="t" style="left:472.5px;top:578.8px;line-height:11.00px;font-size:11.00px;color:#9a9a9a;">5 - Chasing the ghost particule</div><div style="left:466px;top:611px;width:120px;height:27px;background:linear-gradient(#e6dbbf,#d5c8a6);border-radius:4px;"></div><div class="t" style="left:468.3px;top:608.1px;line-height:22.70px;font-size:22.70px;font-weight:700;color:#000;">00:00:00</div><div class="t" style="right:2852.5px;top:619.7px;line-height:9.80px;font-size:9.80px;font-weight:700;color:#000;">:00</div><div style="left:600px;top:606px;width:49px;height:39px;background:#9bd5c3;border-radius:5px;"></div><div style="left:665px;top:606px;width:49px;height:39px;background:#9bd5c3;border-radius:5px;"></div><div style="left:730px;top:606px;width:49px;height:39px;background:#b4c8c2;border-radius:5px;"></div><div style="left:795px;top:606px;width:49px;height:39px;background:#b4c8c2;border-radius:5px;"></div><div style="left:0;top:0;width:3436px;height:1200px;clip-path:inset(650px 2544px 122px 460px);"><div style="left:470px;top:661px;width:415px;height:31px;background:linear-gradient(#958d85,#8a827a);border-radius:5px;"></div><div class="t" style="left:476.5px;top:664.9px;line-height:13.00px;font-size:13.00px;font-weight:700;color:#111;">1</div><div class="t" style="left:493.5px;top:666.8px;line-height:10.20px;font-size:10.20px;font-weight:700;color:#111;">Earth Moon Sun I M&amp;E_01.L</div><div class="t" style="left:493.5px;top:679.3px;line-height:9.10px;font-size:9.10px;color:#0c0c0c;">Asleep</div><div class="t" style="left:558.5px;top:679.3px;line-height:9.10px;font-size:9.10px;color:#0c0c0c;">Go: 00:01:00:000</div><div class="t" style="right:2587.0px;top:679.3px;line-height:9.10px;font-size:9.10px;color:#0c0c0c;">00:28:34</div><div class="t" style="right:2558.0px;top:679.3px;line-height:9.10px;font-size:9.10px;color:#0c0c0c;">A8</div><div style="left:861px;top:662.5px;width:17px;height:14px;background:rgba(0,0,0,0.085);border-radius:4px;"></div><div style="left:845px;top:663.5px;width:15px;height:14px;background:#f7b64c;border-radius:4px;"></div><div class="t" style="left:850.8px;top:665.1px;line-height:10.00px;font-size:10.00px;font-weight:700;color:#111;">!</div><div style="left:470px;top:698px;width:415px;height:31px;background:#cec6b9;border-radius:5px;"></div><div class="t" style="left:476.5px;top:701.9px;line-height:13.00px;font-size:13.00px;font-weight:700;color:#111;">2</div><div class="t" style="left:493.5px;top:703.8px;line-height:10.20px;font-size:10.20px;font-weight:700;color:#111;">secintro_E_channel6</div><div class="t" style="left:493.5px;top:716.3px;line-height:9.10px;font-size:9.10px;color:#0c0c0c;">Asleep</div><div class="t" style="left:558.5px;top:716.3px;line-height:9.10px;font-size:9.10px;color:#0c0c0c;">Go: 00:00:03:000</div><div class="t" style="right:2587.0px;top:716.3px;line-height:9.10px;font-size:9.10px;color:#0c0c0c;">00:00:54</div><div class="t" style="right:2558.0px;top:716.3px;line-height:9.10px;font-size:9.10px;color:#0c0c0c;">A5</div><div style="left:861px;top:699.5px;width:17px;height:14px;background:rgba(0,0,0,0.085);border-radius:4px;"></div><div style="left:470px;top:735px;width:415px;height:31px;background:#cec6b9;border-radius:5px;"></div><div class="t" style="left:476.5px;top:738.9px;line-height:13.00px;font-size:13.00px;font-weight:700;color:#111;">3</div><div class="t" style="left:493.5px;top:740.8px;line-height:10.20px;font-size:10.20px;font-weight:700;color:#111;">secintro_Nl_channel7</div><div class="t" style="left:493.5px;top:753.3px;line-height:9.10px;font-size:9.10px;color:#0c0c0c;">Asleep</div><div class="t" style="left:558.5px;top:753.3px;line-height:9.10px;font-size:9.10px;color:#0c0c0c;">Go: 00:00:03:000</div><div class="t" style="right:2587.0px;top:753.3px;line-height:9.10px;font-size:9.10px;color:#0c0c0c;">00:00:54</div><div class="t" style="right:2558.0px;top:753.3px;line-height:9.10px;font-size:9.10px;color:#0c0c0c;">A6</div><div style="left:861px;top:736.5px;width:17px;height:14px;background:rgba(0,0,0,0.085);border-radius:4px;"></div><div style="left:470px;top:772px;width:415px;height:31px;background:#cec6b9;border-radius:5px;"></div><div class="t" style="left:476.5px;top:775.9px;line-height:13.00px;font-size:13.00px;font-weight:700;color:#111;">4</div><div class="t" style="left:493.5px;top:777.8px;line-height:10.20px;font-size:10.20px;font-weight:700;color:#111;">secintro_Fr_channel8</div><div class="t" style="left:493.5px;top:790.3px;line-height:9.10px;font-size:9.10px;color:#0c0c0c;">Asleep</div><div class="t" style="left:558.5px;top:790.3px;line-height:9.10px;font-size:9.10px;color:#0c0c0c;">Go: 00:00:03:000</div><div class="t" style="right:2587.0px;top:790.3px;line-height:9.10px;font-size:9.10px;color:#0c0c0c;">00:00:54</div><div class="t" style="right:2558.0px;top:790.3px;line-height:9.10px;font-size:9.10px;color:#0c0c0c;">A7</div><div style="left:861px;top:773.5px;width:17px;height:14px;background:rgba(0,0,0,0.085);border-radius:4px;"></div><div style="left:470px;top:809px;width:415px;height:31px;background:#cec6b9;border-radius:5px;"></div><div class="t" style="left:476.5px;top:812.9px;line-height:13.00px;font-size:13.00px;font-weight:700;color:#111;">5</div><div class="t" style="left:493.5px;top:814.8px;line-height:10.20px;font-size:10.20px;font-weight:700;color:#111;">Chasing the ghost particule ENG NL FR</div><div class="t" style="left:493.5px;top:827.3px;line-height:9.10px;font-size:9.10px;color:#0c0c0c;">Asleep</div><div class="t" style="right:2587.0px;top:827.3px;line-height:9.10px;font-size:9.10px;color:#0c0c0c;">00:30:31</div><div class="t" style="right:2558.0px;top:827.3px;line-height:9.10px;font-size:9.10px;color:#0c0c0c;">A23</div><div style="left:861px;top:810.5px;width:17px;height:14px;background:rgba(0,0,0,0.085);border-radius:4px;"></div><div style="left:470px;top:846px;width:415px;height:31px;background:#cec6b9;border-radius:5px;"></div><div class="t" style="left:476.5px;top:849.9px;line-height:13.00px;font-size:13.00px;font-weight:700;color:#111;">6</div><div class="t" style="left:493.5px;top:851.8px;line-height:10.20px;font-size:10.20px;font-weight:700;color:#111;">live1_zomer_E</div><div class="t" style="left:493.5px;top:864.3px;line-height:9.10px;font-size:9.10px;color:#0c0c0c;">Asleep</div><div class="t" style="left:558.5px;top:864.3px;line-height:9.10px;font-size:9.10px;color:#0c0c0c;">Go: 01:00:00:000</div><div class="t" style="right:2587.0px;top:864.3px;line-height:9.10px;font-size:9.10px;color:#0c0c0c;">00:07:24</div><div class="t" style="right:2558.0px;top:864.3px;line-height:9.10px;font-size:9.10px;color:#0c0c0c;">A5</div><div style="left:861px;top:847.5px;width:17px;height:14px;background:rgba(0,0,0,0.085);border-radius:4px;"></div><div style="left:470px;top:883px;width:415px;height:31px;background:#cec6b9;border-radius:5px;"></div><div class="t" style="left:476.5px;top:886.9px;line-height:13.00px;font-size:13.00px;font-weight:700;color:#111;">7</div><div class="t" style="left:493.5px;top:888.8px;line-height:10.20px;font-size:10.20px;font-weight:700;color:#111;">live1_zomer_Nl</div><div class="t" style="left:493.5px;top:901.3px;line-height:9.10px;font-size:9.10px;color:#0c0c0c;">Asleep</div><div class="t" style="left:558.5px;top:901.3px;line-height:9.10px;font-size:9.10px;color:#0c0c0c;">Go: 01:00:00:000</div><div class="t" style="right:2587.0px;top:901.3px;line-height:9.10px;font-size:9.10px;color:#0c0c0c;">00:07:24</div><div class="t" style="right:2558.0px;top:901.3px;line-height:9.10px;font-size:9.10px;color:#0c0c0c;">A6</div><div style="left:861px;top:884.5px;width:17px;height:14px;background:rgba(0,0,0,0.085);border-radius:4px;"></div><div style="left:470px;top:920px;width:415px;height:31px;background:#cec6b9;border-radius:5px;"></div><div class="t" style="left:476.5px;top:923.9px;line-height:13.00px;font-size:13.00px;font-weight:700;color:#111;">8</div><div class="t" style="left:493.5px;top:925.8px;line-height:10.20px;font-size:10.20px;font-weight:700;color:#111;">live1_zomer_Fr</div><div class="t" style="left:493.5px;top:938.3px;line-height:9.10px;font-size:9.10px;color:#0c0c0c;">Asleep</div><div class="t" style="left:558.5px;top:938.3px;line-height:9.10px;font-size:9.10px;color:#0c0c0c;">Go: 01:00:00:000</div><div class="t" style="right:2587.0px;top:938.3px;line-height:9.10px;font-size:9.10px;color:#0c0c0c;">00:07:24</div><div class="t" style="right:2558.0px;top:938.3px;line-height:9.10px;font-size:9.10px;color:#0c0c0c;">A7</div><div style="left:861px;top:921.5px;width:17px;height:14px;background:rgba(0,0,0,0.085);border-radius:4px;"></div><div style="left:470px;top:957px;width:415px;height:31px;background:#cec6b9;border-radius:5px;"></div><div class="t" style="left:476.5px;top:960.9px;line-height:13.00px;font-size:13.00px;font-weight:700;color:#111;">9</div><div class="t" style="left:493.5px;top:962.8px;line-height:10.20px;font-size:10.20px;font-weight:700;color:#111;">muziekLIVEZOMER1</div><div class="t" style="left:493.5px;top:975.3px;line-height:9.10px;font-size:9.10px;color:#0c0c0c;">Asleep</div><div class="t" style="left:558.5px;top:975.3px;line-height:9.10px;font-size:9.10px;color:#0c0c0c;">Go: 01:00:00:000</div><div class="t" style="right:2587.0px;top:975.3px;line-height:9.10px;font-size:9.10px;color:#0c0c0c;">00:09:41</div><div class="t" style="right:2558.0px;top:975.3px;line-height:9.10px;font-size:9.10px;color:#0c0c0c;">A4</div><div style="left:861px;top:958.5px;width:17px;height:14px;background:rgba(0,0,0,0.085);border-radius:4px;"></div><div style="left:470px;top:994px;width:415px;height:31px;background:#cec6b9;border-radius:5px;"></div><div class="t" style="left:476.5px;top:997.9px;line-height:13.00px;font-size:13.00px;font-weight:700;color:#111;">10</div><div class="t" style="left:504.0px;top:999.8px;line-height:10.20px;font-size:10.20px;font-weight:700;color:#111;">live2_zomer_E</div><div class="t" style="left:504.0px;top:1012.3px;line-height:9.10px;font-size:9.10px;color:#0c0c0c;">Asleep</div><div class="t" style="left:558.5px;top:1012.3px;line-height:9.10px;font-size:9.10px;color:#0c0c0c;">Go: 01:10:00:000</div><div class="t" style="right:2587.0px;top:1012.3px;line-height:9.10px;font-size:9.10px;color:#0c0c0c;">00:06:55</div><div class="t" style="right:2558.0px;top:1012.3px;line-height:9.10px;font-size:9.10px;color:#0c0c0c;">A5</div><div style="left:861px;top:995.5px;width:17px;height:14px;background:rgba(0,0,0,0.085);border-radius:4px;"></div><div style="left:470px;top:1031px;width:415px;height:31px;background:#cec6b9;border-radius:5px;"></div><div class="t" style="left:476.5px;top:1034.9px;line-height:13.00px;font-size:13.00px;font-weight:700;color:#111;">11</div><div class="t" style="left:504.0px;top:1036.8px;line-height:10.20px;font-size:10.20px;font-weight:700;color:#111;">live2_zomer_Nl</div><div class="t" style="left:504.0px;top:1049.3px;line-height:9.10px;font-size:9.10px;color:#0c0c0c;">Asleep</div><div class="t" style="left:558.5px;top:1049.3px;line-height:9.10px;font-size:9.10px;color:#0c0c0c;">Go: 01:10:00:000</div><div class="t" style="right:2587.0px;top:1049.3px;line-height:9.10px;font-size:9.10px;color:#0c0c0c;">00:06:55</div><div class="t" style="right:2558.0px;top:1049.3px;line-height:9.10px;font-size:9.10px;color:#0c0c0c;">A6</div><div style="left:861px;top:1032.5px;width:17px;height:14px;background:rgba(0,0,0,0.085);border-radius:4px;"></div><div style="left:470px;top:1068px;width:415px;height:10px;background:#cec6b9;border-radius:5px 5px 0 0;"></div><div class="t" style="left:476.5px;top:1071.9px;line-height:13.00px;font-size:13.00px;font-weight:700;color:#111;">12</div><div class="t" style="left:504.0px;top:1073.8px;line-height:10.20px;font-size:10.20px;font-weight:700;color:#111;">live2_zomer_Fr</div><div class="t" style="left:504.0px;top:1086.3px;line-height:9.10px;font-size:9.10px;color:#0c0c0c;">Asleep</div><div class="t" style="left:558.5px;top:1086.3px;line-height:9.10px;font-size:9.10px;color:#0c0c0c;">Go: 01:10:00:000</div><div class="t" style="right:2587.0px;top:1086.3px;line-height:9.10px;font-size:9.10px;color:#0c0c0c;">00:06:55</div><div class="t" style="right:2558.0px;top:1086.3px;line-height:9.10px;font-size:9.10px;color:#0c0c0c;">A7</div><div style="left:861px;top:1069.5px;width:17px;height:14px;background:rgba(0,0,0,0.085);border-radius:4px;"></div></div><div style="left:893px;top:664px;width:13px;height:13px;background:#3a3a3a;border-radius:3px;"></div><div style="left:893px;top:1059px;width:13px;height:13px;background:#3a3a3a;border-radius:3px;"></div><div style="left:893px;top:692px;width:13px;height:298px;background:#444444;border-radius:6px;"></div><div style="left:923px;top:58px;width:455px;height:18px;background:#de905d;border-radius:4px;"></div><div class="t" style="left:927.5px;top:62.8px;line-height:11.00px;font-size:11.00px;color:#1a1a1a;">6 - PAN AUTOMATION</div><div style="left:929px;top:91px;width:106px;height:106px;background:#9c6b48;border-radius:6px;"></div><div class="t" style="left:935.5px;top:101.6px;line-height:13.00px;font-size:13.00px;font-weight:700;color:#111;">1</div><div class="t" style="left:952.0px;top:103.2px;line-height:9.80px;font-size:9.80px;font-weight:700;color:#111;">UP LEFT FRONT</div><div class="t" style="left:935.0px;top:178.4px;line-height:9.40px;font-size:9.40px;color:#1a1a1a;">Ready</div><div class="t" style="right:2406.5px;top:178.4px;line-height:9.40px;font-size:9.40px;color:#1a1a1a;">00:00:01</div><div style="left:1041px;top:91px;width:106px;height:106px;background:#de905d;border-radius:6px;"></div><div class="t" style="left:1047.5px;top:101.6px;line-height:13.00px;font-size:13.00px;font-weight:700;color:#111;">2</div><div class="t" style="left:1064.0px;top:103.2px;line-height:9.80px;font-size:9.80px;font-weight:700;color:#111;">MIDDLE</div><div class="t" style="left:1064.0px;top:115.0px;line-height:9.80px;font-size:9.80px;font-weight:700;color:#111;">CENTER</div><div class="t" style="left:1064.0px;top:126.8px;line-height:9.80px;font-size:9.80px;font-weight:700;color:#111;">DIVERGENCE</div><div class="t" style="left:1047.0px;top:178.4px;line-height:9.40px;font-size:9.40px;color:#1a1a1a;">Ready</div><div class="t" style="right:2294.5px;top:178.4px;line-height:9.40px;font-size:9.40px;color:#1a1a1a;">00:00:01</div><div style="left:1153px;top:91px;width:106px;height:106px;background:#de905d;border-radius:6px;"></div><div class="t" style="left:1159.5px;top:101.6px;line-height:13.00px;font-size:13.00px;font-weight:700;color:#111;">3</div><div class="t" style="left:1176.0px;top:103.2px;line-height:9.80px;font-size:9.80px;font-weight:700;color:#111;">MIDDLE</div><div class="t" style="left:1176.0px;top:115.0px;line-height:9.80px;font-size:9.80px;font-weight:700;color:#111;">REVERSE</div><div class="t" style="left:1159.0px;top:178.4px;line-height:9.40px;font-size:9.40px;color:#1a1a1a;">Ready</div><div class="t" style="right:2182.5px;top:178.4px;line-height:9.40px;font-size:9.40px;color:#1a1a1a;">00:00:01</div><div style="left:1265px;top:91px;width:106px;height:106px;background:#de905d;border-radius:6px;"></div><div class="t" style="left:1271.5px;top:101.6px;line-height:13.00px;font-size:13.00px;font-weight:700;color:#111;">4</div><div class="t" style="left:1288.0px;top:103.2px;line-height:9.80px;font-size:9.80px;font-weight:700;color:#111;">FR CENTRE</div><div class="t" style="left:1271.0px;top:178.4px;line-height:9.40px;font-size:9.40px;color:#1a1a1a;">Ready</div><div class="t" style="right:2070.5px;top:178.4px;line-height:9.40px;font-size:9.40px;color:#1a1a1a;">00:00:01</div><div style="left:929px;top:203px;width:106px;height:106px;background:#de905d;border-radius:6px;"></div><div class="t" style="left:935.5px;top:213.6px;line-height:13.00px;font-size:13.00px;font-weight:700;color:#111;">5</div><div class="t" style="left:952.0px;top:215.2px;line-height:9.80px;font-size:9.80px;font-weight:700;color:#111;">FR MOve</div><div class="t" style="left:935.0px;top:290.4px;line-height:9.40px;font-size:9.40px;color:#1a1a1a;">Ready</div><div class="t" style="right:2406.5px;top:290.4px;line-height:9.40px;font-size:9.40px;color:#1a1a1a;">00:00:01</div><div style="left:1041px;top:203px;width:106px;height:106px;background:#de905d;border-radius:6px;"></div><div class="t" style="left:1047.5px;top:213.6px;line-height:13.00px;font-size:13.00px;font-weight:700;color:#111;">6</div><div class="t" style="left:1064.0px;top:215.2px;line-height:9.80px;font-size:9.80px;font-weight:700;color:#111;">FR MOve more</div><div class="t" style="left:1047.0px;top:290.4px;line-height:9.40px;font-size:9.40px;color:#1a1a1a;">Ready</div><div class="t" style="right:2294.5px;top:290.4px;line-height:9.40px;font-size:9.40px;color:#1a1a1a;">00:00:01</div><div style="left:1153px;top:203px;width:106px;height:106px;background:#33cc33;border-radius:6px;"></div><div class="t" style="left:1159.5px;top:213.6px;line-height:13.00px;font-size:13.00px;font-weight:700;color:#111;">7</div><div class="t" style="left:1176.0px;top:215.2px;line-height:9.80px;font-size:9.80px;font-weight:700;color:#111;">Launch show</div><div class="t" style="left:1159.0px;top:290.4px;line-height:9.40px;font-size:9.40px;color:#1a1a1a;">Ready</div><div class="t" style="right:2182.5px;top:290.4px;line-height:9.40px;font-size:9.40px;color:#1a1a1a;">00:00:01</div><div style="left:1232px;top:258px;width:14px;height:14px;background:#a8a8a0;border-radius:3px;"></div><div class="t" style="left:1237.4px;top:260.3px;line-height:9.50px;font-size:9.50px;font-weight:700;color:#111;">!</div><div style="left:1265px;top:203px;width:106px;height:106px;background:#ffff00;border-radius:6px;"></div><div class="t" style="left:1271.5px;top:213.6px;line-height:13.00px;font-size:13.00px;font-weight:700;color:#111;">8</div><div class="t" style="left:1288.0px;top:215.2px;line-height:9.80px;font-size:9.80px;font-weight:700;color:#111;">DIM ALL CUES</div><div class="t" style="left:1271.0px;top:290.4px;line-height:9.40px;font-size:9.40px;color:#1a1a1a;">Ready</div><div class="t" style="right:2070.5px;top:290.4px;line-height:9.40px;font-size:9.40px;color:#1a1a1a;">00:00:01</div><div style="left:1344px;top:258px;width:14px;height:14px;background:#a8a8a0;border-radius:3px;"></div><div class="t" style="left:1349.4px;top:260.3px;line-height:9.50px;font-size:9.50px;font-weight:700;color:#111;">!</div><div style="left:929px;top:315px;width:106px;height:106px;background:#de905d;border-radius:6px;"></div><div class="t" style="left:935.5px;top:325.6px;line-height:13.00px;font-size:13.00px;font-weight:700;color:#111;">9</div><div class="t" style="left:952.0px;top:327.2px;line-height:9.80px;font-size:9.80px;font-weight:700;color:#111;">ALL languages</div><div class="t" style="left:935.0px;top:402.4px;line-height:9.40px;font-size:9.40px;color:#1a1a1a;">Ready</div><div class="t" style="right:2406.5px;top:402.4px;line-height:9.40px;font-size:9.40px;color:#1a1a1a;">00:00:10</div><div style="left:1041px;top:315px;width:106px;height:106px;background:#de905d;border-radius:6px;"></div><div class="t" style="left:1047.5px;top:325.6px;line-height:13.00px;font-size:13.00px;font-weight:700;color:#111;">10</div><div class="t" style="left:1071.0px;top:327.2px;line-height:9.80px;font-size:9.80px;font-weight:700;color:#111;">ENG ONLY</div><div class="t" style="left:1047.0px;top:402.4px;line-height:9.40px;font-size:9.40px;color:#1a1a1a;">Ready</div><div class="t" style="right:2294.5px;top:402.4px;line-height:9.40px;font-size:9.40px;color:#1a1a1a;">00:00:10</div><div style="left:1153px;top:315px;width:106px;height:106px;background:#de905d;border-radius:6px;"></div><div class="t" style="left:1159.5px;top:325.6px;line-height:13.00px;font-size:13.00px;font-weight:700;color:#111;">11</div><div class="t" style="left:1183.0px;top:327.2px;line-height:9.80px;font-size:9.80px;font-weight:700;color:#111;">FR ONLY</div><div class="t" style="left:1159.0px;top:402.4px;line-height:9.40px;font-size:9.40px;color:#1a1a1a;">Ready</div><div class="t" style="right:2182.5px;top:402.4px;line-height:9.40px;font-size:9.40px;color:#1a1a1a;">00:00:10</div><div style="left:1265px;top:315px;width:106px;height:106px;background:#de905d;border-radius:6px;"></div><div class="t" style="left:1271.5px;top:325.6px;line-height:13.00px;font-size:13.00px;font-weight:700;color:#111;">12</div><div class="t" style="left:1295.0px;top:327.2px;line-height:9.80px;font-size:9.80px;font-weight:700;color:#111;">NL ONLY</div><div class="t" style="left:1271.0px;top:402.4px;line-height:9.40px;font-size:9.40px;color:#1a1a1a;">Ready</div><div class="t" style="right:2070.5px;top:402.4px;line-height:9.40px;font-size:9.40px;color:#1a1a1a;">00:00:10</div><div style="left:929px;top:427px;width:106px;height:101px;background:#262626;border-radius:6px;"></div><div class="t" style="left:938.0px;top:439.1px;line-height:12.00px;font-size:12.00px;color:#343434;">13</div><div style="left:1041px;top:427px;width:106px;height:101px;background:#262626;border-radius:6px;"></div><div class="t" style="left:1050.0px;top:439.1px;line-height:12.00px;font-size:12.00px;color:#343434;">14</div><div style="left:1153px;top:427px;width:106px;height:101px;background:#262626;border-radius:6px;"></div><div class="t" style="left:1162.0px;top:439.1px;line-height:12.00px;font-size:12.00px;color:#343434;">15</div><div style="left:1265px;top:427px;width:106px;height:101px;background:#262626;border-radius:6px;"></div><div class="t" style="left:1274.0px;top:439.1px;line-height:12.00px;font-size:12.00px;color:#343434;">16</div><div style="left:923px;top:538px;width:455px;height:18px;background:#1c1c1c;border-radius:4px;"></div><div class="t" style="left:927.5px;top:542.8px;line-height:11.00px;font-size:11.00px;color:#9a9a9a;">Active Cue</div><div style="left:922px;top:564px;width:457px;height:18px;background:#95c4b2;border-radius:5px;"></div><div class="t" style="left:929.0px;top:568.2px;line-height:9.80px;font-size:9.80px;font-weight:700;color:#1a1a1a;">4 - SLOS</div><div style="left:922px;top:585px;width:355px;height:31px;background:#cec6b9;border-radius:5px;"></div><div class="t" style="left:928.5px;top:588.6px;line-height:13.00px;font-size:13.00px;font-weight:700;color:#111;">3</div><div class="t" style="left:945.5px;top:590.8px;line-height:10.20px;font-size:10.20px;font-weight:700;color:#111;">secintro_Fr_channel8</div><div class="t" style="left:945.5px;top:603.3px;line-height:9.10px;font-size:9.10px;color:#1a1a1a;">Playing</div><div style="left:1008px;top:603.5px;width:130px;height:9.5px;background:#262626;border-radius:5px;"></div><div style="left:1009px;top:604.5px;width:28px;height:7.5px;background:#63e27a;border-radius:4px;"></div><div class="t" style="right:2196.0px;top:604.0px;line-height:10.30px;font-size:10.30px;font-weight:700;color:#111;">00:00:11 - 00:00:43</div><div class="t" style="right:2166.0px;top:602.5px;line-height:9.10px;font-size:9.10px;color:#1a1a1a;">A7</div><div style="left:1253px;top:586px;width:17px;height:14px;background:rgba(0,0,0,0.085);border-radius:4px;"></div><div style="left:1280px;top:585px;width:31px;height:31px;background:#cec6b9;border-radius:5px;"></div><div style="left:1314px;top:585px;width:31px;height:31px;background:#cec6b9;border-radius:5px;"></div><div style="left:1348px;top:585px;width:31px;height:31px;background:#cec6b9;border-radius:5px;"></div><div style="left:0;top:0;width:3436px;height:1200px;clip-path:inset(618px 2057px 558px 922px);"><div style="left:922px;top:622px;width:457px;height:20px;background:#333333;"></div><div class="t" style="left:932.0px;top:629.3px;line-height:10.70px;font-size:10.70px;color:#c4c4c4;">00:00:00:000</div><div class="t" style="left:1012.0px;top:629.3px;line-height:10.70px;font-size:10.70px;color:#c4c4c4;">00:00:10:000</div><div class="t" style="left:1092.0px;top:629.3px;line-height:10.70px;font-size:10.70px;color:#c4c4c4;">00:00:20:000</div><div class="t" style="left:1172.0px;top:629.3px;line-height:10.70px;font-size:10.70px;color:#c4c4c4;">00:00:30:000</div><div class="t" style="left:1252.0px;top:629.3px;line-height:10.70px;font-size:10.70px;color:#c4c4c4;">00:00:40:000</div><div class="t" style="left:1332.0px;top:629.3px;line-height:10.70px;font-size:10.70px;color:#c4c4c4;">00:00:50:000</div></div><div style="left:930px;top:642px;width:440px;height:353px;background:#434343;"></div><div style="left:924px;top:1003px;width:13px;height:15px;background:#cec6b9;border-radius:3px;"></div><div style="left:948px;top:1003px;width:13px;height:15px;background:#cec6b9;border-radius:4px;"></div><div style="left:964px;top:1009px;width:292px;height:4px;background:#444;border-radius:2px;"></div><div style="left:1262px;top:1003px;width:14px;height:15px;background:#cec6b9;border-radius:3px;"></div><div style="left:1285px;top:1000px;width:22px;height:22px;background:#cec6b9;border-radius:4px;"></div><div style="left:1310px;top:1000px;width:22px;height:22px;background:#cec6b9;border-radius:4px;"></div><div style="left:1336px;top:1000px;width:22px;height:22px;background:#cec6b9;border-radius:4px;"></div><div style="left:1361px;top:1000px;width:22px;height:22px;background:#cec6b9;border-radius:4px;"></div><div style="left:929px;top:1033px;width:49px;height:39px;background:#ef3b3e;border-radius:5px;"></div><div style="left:994px;top:1033px;width:49px;height:39px;background:#ffc91f;border-radius:5px;"></div><div style="left:1059px;top:1033px;width:49px;height:39px;background:linear-gradient(135deg,#e6e0d4,#d8d0c0);border-radius:5px;"></div><div style="left:1130px;top:1033px;width:49px;height:39px;background:#cfcfcf;border-radius:5px;"></div><div style="left:1187px;top:1039px;width:120px;height:27px;background:linear-gradient(135deg,#ddd6bc,#c9c09c);border-radius:5px;"></div><div class="t" style="left:1203.6px;top:1041.7px;line-height:22.00px;font-size:22.00px;font-weight:700;color:#000;">00:00:11</div><div style="left:1315px;top:1033px;width:49px;height:39px;background:linear-gradient(135deg,#e9e4d8,#ddd6c6);border-radius:5px;"></div><div class="t" style="left:1335.6px;top:1045.6px;line-height:14.00px;font-size:14.00px;font-weight:700;color:#111;">1</div><div class="t" style="left:19.0px;top:39.0px;line-height:11.50px;font-size:11.50px;color:#a8a8a8;">Show</div><div class="t" style="left:64.3px;top:39.0px;line-height:11.50px;font-size:11.50px;color:#a8a8a8;">Cue List</div><div class="t" style="left:122.2px;top:39.0px;line-height:11.50px;font-size:11.50px;color:#a8a8a8;">Cue</div><div class="t" style="left:159.0px;top:39.0px;line-height:11.50px;font-size:11.50px;color:#a8a8a8;">Fire</div><div class="t" style="left:194.0px;top:39.0px;line-height:11.50px;font-size:11.50px;color:#a8a8a8;">View</div><div class="t" style="left:235.0px;top:39.0px;line-height:11.50px;font-size:11.50px;color:#a8a8a8;">Settings</div><div class="t" style="left:293.0px;top:39.0px;line-height:11.50px;font-size:11.50px;color:#a8a8a8;">Help</div><div class="t" style="left:752.5px;top:12.1px;line-height:11.50px;font-size:11.50px;color:#9c9c9c;">Ovation - D:\_Demo projects\JTSE 2021 Planetarium\Version 7-2 JTSE planetarium.ovs</div><div style="left:47px;top:1143px;width:49px;height:39px;background:#f4f1ea;border-radius:5px;"></div><div style="left:112px;top:1143px;width:49px;height:39px;background:#f4f1ea;border-radius:5px;"></div><div style="left:183px;top:1143px;width:49px;height:39px;background:#ea383c;border-radius:5px;"></div><div style="left:254px;top:1143px;width:49px;height:39px;background:#f4f1ea;border-radius:5px;"></div><div style="left:319px;top:1143px;width:49px;height:39px;background:#f4f1ea;border-radius:5px;"></div><div style="left:390px;top:1143px;width:49px;height:39px;background:#d9d1c1;border-radius:5px;"></div><div style="left:461px;top:1143px;width:49px;height:39px;background:#ef3b3e;border-radius:5px;"></div><div style="left:526px;top:1143px;width:49px;height:39px;background:#fdc521;border-radius:5px;"></div><div style="left:591px;top:1143px;width:49px;height:39px;background:#dcd4c4;border-radius:5px;"></div><div style="left:654px;top:1149px;width:120px;height:27px;background:linear-gradient(135deg,#ddd6bc,#c9c09c);border-radius:5px;"></div><div class="t" style="left:668.8px;top:1151.4px;line-height:22.60px;font-size:22.60px;font-weight:700;color:#000;">00:00:28</div><div style="left:788px;top:1143px;width:49px;height:39px;background:#9babd3;border-radius:5px;"></div><div class="t" style="left:803.1px;top:1148.6px;line-height:12.60px;font-size:12.60px;font-weight:700;color:#8191bd;">Init</div><div class="t" style="left:795.7px;top:1165.0px;line-height:12.60px;font-size:12.60px;font-weight:700;color:#8191bd;">Show</div><div style="left:853px;top:1143px;width:49px;height:39px;background:#9babd3;border-radius:5px;"></div><div class="t" style="left:863.1px;top:1148.6px;line-height:12.60px;font-size:12.60px;font-weight:700;color:#8191bd;">Start</div><div class="t" style="left:860.7px;top:1165.0px;line-height:12.60px;font-size:12.60px;font-weight:700;color:#8191bd;">Show</div><div style="left:918px;top:1143px;width:49px;height:39px;background:#6b9cf5;border-radius:5px;"></div><div class="t" style="left:923.9px;top:1148.6px;line-height:12.60px;font-size:12.60px;font-weight:700;color:#0a0f30;">Pause</div><div class="t" style="left:925.7px;top:1165.0px;line-height:12.60px;font-size:12.60px;font-weight:700;color:#0a0f30;">Show</div><div style="left:983px;top:1143px;width:49px;height:39px;background:#6b9cf5;border-radius:5px;"></div><div class="t" style="left:993.5px;top:1148.6px;line-height:12.60px;font-size:12.60px;font-weight:700;color:#0a0f30;">Stop</div><div class="t" style="left:990.7px;top:1165.0px;line-height:12.60px;font-size:12.60px;font-weight:700;color:#0a0f30;">Show</div><div style="left:1391px;top:58px;width:517px;height:18px;background:#1c1c1c;border-radius:4px;"></div><div class="t" style="left:1394.5px;top:62.4px;line-height:11.40px;font-size:11.40px;color:#9a9a9a;">Cue Properties</div><div style="left:1391px;top:86px;width:99px;height:29px;background:#1b1b1b;border-radius:4px 4px 0 0;"></div><div style="left:1495.5px;top:86px;width:113px;height:29px;background:#1b1b1b;border-radius:4px 4px 0 0;"></div><div style="left:1612px;top:86px;width:104px;height:29px;background:#b5b5b5;border-radius:4px 4px 0 0;"></div><div class="t" style="left:1398.2px;top:94.4px;line-height:11.50px;font-size:11.50px;color:#9a9a9a;">Show Properties</div><div class="t" style="left:1503.3px;top:94.4px;line-height:11.50px;font-size:11.50px;color:#9a9a9a;">Cue List Properties</div><div class="t" style="left:1621.0px;top:94.4px;line-height:11.50px;font-size:11.50px;color:#1a1a1a;">Cue Properties</div><div style="left:0;top:0;width:3436px;height:1078px;overflow:hidden;"><div style="left:1389px;top:117px;width:504px;height:961px;background:#a7a7a7;"></div><div style="left:1893px;top:117px;width:17px;height:961px;background:#f0f0f0;"></div><div style="left:1901px;top:134px;width:2px;height:867px;background:#666;"></div><div class="t" style="left:1405.7px;top:120.4px;line-height:12.00px;font-size:12.00px;font-weight:700;color:#111;">Cue</div><div style="left:1403px;top:136px;width:246.5px;height:18px;background:#cbcbcb;"></div><div style="left:1650.5px;top:136px;width:242.5px;height:18px;background:#ffffff;"></div><div class="t" style="left:1406.2px;top:139.1px;line-height:12.10px;font-size:12.10px;color:#808080;">Number</div><div class="t" style="left:1654.0px;top:139.1px;line-height:12.10px;font-size:12.10px;color:#808080;">3</div><div style="left:1403px;top:155px;width:246.5px;height:18px;background:#cbcbcb;"></div><div style="left:1650.5px;top:155px;width:242.5px;height:18px;background:#ffffff;"></div><div class="t" style="left:1406.2px;top:158.1px;line-height:12.10px;font-size:12.10px;color:#111;">Name</div><div class="t" style="left:1654.0px;top:158.1px;line-height:12.10px;font-size:12.10px;color:#111;">secintro_Fr_channel8</div><div style="left:1403px;top:174px;width:246.5px;height:48px;background:#cbcbcb;"></div><div style="left:1650.5px;top:174px;width:242.5px;height:48px;background:#ffffff;"></div><div class="t" style="left:1406.2px;top:192.1px;line-height:12.10px;font-size:12.10px;color:#111;">Comments</div><div style="left:1403px;top:223px;width:246.5px;height:18px;background:#cbcbcb;"></div><div style="left:1650.5px;top:223px;width:242.5px;height:18px;background:#ffffff;"></div><div class="t" style="left:1406.2px;top:226.1px;line-height:12.10px;font-size:12.10px;color:#111;">Pinned to Active Cue Window</div><div class="t" style="left:1654.0px;top:226.1px;line-height:12.10px;font-size:12.10px;color:#111;">Yes</div><div style="left:1403px;top:242px;width:246.5px;height:18px;background:#cbcbcb;"></div><div style="left:1650.5px;top:242px;width:242.5px;height:18px;background:#ffffff;"></div><div class="t" style="left:1406.2px;top:245.1px;line-height:12.10px;font-size:12.10px;color:#111;">Length</div><div class="t" style="left:1654.0px;top:245.1px;line-height:12.10px;font-size:12.10px;color:#111;">00:00:54:869</div><div style="left:1403px;top:261px;width:246.5px;height:18px;background:#cbcbcb;"></div><div style="left:1650.5px;top:261px;width:242.5px;height:18px;background:#ffffff;"></div><div class="t" style="left:1406.2px;top:264.1px;line-height:12.10px;font-size:12.10px;color:#111;">Rehearsal Preset</div><div class="t" style="left:1654.0px;top:264.1px;line-height:12.10px;font-size:12.10px;color:#111;">Invalid (Preset 1)</div><div style="left:1403px;top:280px;width:246.5px;height:18px;background:#cbcbcb;"></div><div style="left:1650.5px;top:280px;width:242.5px;height:18px;background:#ffffff;"></div><div class="t" style="left:1406.2px;top:283.1px;line-height:12.10px;font-size:12.10px;color:#111;">Fade In</div><div class="t" style="left:1654.0px;top:283.1px;line-height:12.10px;font-size:12.10px;color:#111;">0 [ms]</div><div style="left:1403px;top:299px;width:246.5px;height:18px;background:#cbcbcb;"></div><div style="left:1650.5px;top:299px;width:242.5px;height:18px;background:#ffffff;"></div><div class="t" style="left:1406.2px;top:302.1px;line-height:12.10px;font-size:12.10px;color:#111;">Fade In Curve</div><div class="t" style="left:1654.0px;top:302.1px;line-height:12.10px;font-size:12.10px;color:#111;">Linear</div><div style="left:1403px;top:318px;width:246.5px;height:18px;background:#cbcbcb;"></div><div style="left:1650.5px;top:318px;width:242.5px;height:18px;background:#ffffff;"></div><div class="t" style="left:1406.2px;top:321.1px;line-height:12.10px;font-size:12.10px;color:#111;">Fade Out</div><div class="t" style="left:1654.0px;top:321.1px;line-height:12.10px;font-size:12.10px;color:#111;">0 [ms]</div><div style="left:1403px;top:337px;width:246.5px;height:18px;background:#cbcbcb;"></div><div style="left:1650.5px;top:337px;width:242.5px;height:18px;background:#ffffff;"></div><div class="t" style="left:1406.2px;top:340.1px;line-height:12.10px;font-size:12.10px;color:#111;">Fade Out Curve</div><div class="t" style="left:1654.0px;top:340.1px;line-height:12.10px;font-size:12.10px;color:#111;">Linear</div><div style="left:1403px;top:356px;width:246.5px;height:18px;background:#cbcbcb;"></div><div style="left:1650.5px;top:356px;width:242.5px;height:18px;background:#ffffff;"></div><div class="t" style="left:1406.2px;top:359.1px;line-height:12.10px;font-size:12.10px;color:#111;">Stop Fade Out</div><div class="t" style="left:1654.0px;top:359.1px;line-height:12.10px;font-size:12.10px;color:#111;">&lt;Default&gt;</div><div style="left:1403px;top:375px;width:246.5px;height:78px;background:#cbcbcb;"></div><div style="left:1650.5px;top:375px;width:242.5px;height:78px;background:#ffffff;"></div><div class="t" style="left:1406.2px;top:408.1px;line-height:12.10px;font-size:12.10px;color:#111;">Interaction Rules</div><div style="left:1403px;top:454px;width:246.5px;height:18px;background:#cbcbcb;"></div><div style="left:1650.5px;top:454px;width:242.5px;height:18px;background:#ffffff;"></div><div class="t" style="left:1406.2px;top:457.1px;line-height:12.10px;font-size:12.10px;color:#111;">Ignore Parent Rules</div><div class="t" style="left:1654.0px;top:457.1px;line-height:12.10px;font-size:12.10px;color:#111;">No</div><div style="left:1403px;top:473px;width:246.5px;height:18px;background:#cbcbcb;"></div><div style="left:1650.5px;top:473px;width:242.5px;height:18px;background:#ffffff;"></div><div class="t" style="left:1406.2px;top:476.1px;line-height:12.10px;font-size:12.10px;color:#111;">Fire at Show Start</div><div class="t" style="left:1654.0px;top:476.1px;line-height:12.10px;font-size:12.10px;color:#111;">No</div><div style="left:1403px;top:492px;width:246.5px;height:18px;background:#cbcbcb;"></div><div style="left:1650.5px;top:492px;width:242.5px;height:18px;background:#ffffff;"></div><div class="t" style="left:1406.2px;top:495.1px;line-height:12.10px;font-size:12.10px;color:#111;">Output Player</div><div class="t" style="left:1405.7px;top:514.4px;line-height:12.00px;font-size:12.00px;font-weight:700;color:#111;">Markers</div><div class="t" style="left:1405.7px;top:533.4px;line-height:12.00px;font-size:12.00px;font-weight:700;color:#111;">Timed Cue</div><div style="left:1403px;top:549px;width:246.5px;height:18px;background:#cbcbcb;"></div><div style="left:1650.5px;top:549px;width:242.5px;height:18px;background:#ffffff;"></div><div class="t" style="left:1406.2px;top:552.1px;line-height:12.10px;font-size:12.10px;color:#111;">Go Time</div><div class="t" style="left:1654.0px;top:552.1px;line-height:12.10px;font-size:12.10px;color:#111;">00:00:03:000</div><div class="t" style="left:1405.7px;top:571.4px;line-height:12.00px;font-size:12.00px;font-weight:700;color:#111;">Hot Key</div><div class="t" style="left:1405.7px;top:590.4px;line-height:12.00px;font-size:12.00px;font-weight:700;color:#111;">Custom Key</div><div style="left:1403px;top:606px;width:246.5px;height:18px;background:#cbcbcb;"></div><div style="left:1650.5px;top:606px;width:242.5px;height:18px;background:#ffffff;"></div><div class="t" style="left:1406.2px;top:609.1px;line-height:12.10px;font-size:12.10px;color:#111;">Custom Color</div><div style="left:1653.5px;top:609px;width:15px;height:12px;background:#000;"></div><div class="t" style="left:1675.5px;top:609.1px;line-height:12.10px;font-size:12.10px;color:#111;">255; 255; 255</div><div style="left:1403px;top:625px;width:246.5px;height:18px;background:#cbcbcb;"></div><div style="left:1650.5px;top:625px;width:242.5px;height:18px;background:#ffffff;"></div><div class="t" style="left:1406.2px;top:628.1px;line-height:12.10px;font-size:12.10px;color:#111;">Custom Font</div><div class="t" style="left:1654.0px;top:628.1px;line-height:12.10px;font-size:12.10px;color:#111;">Arial / -10pt / Bold</div><div style="left:1403px;top:644px;width:246.5px;height:18px;background:#cbcbcb;"></div><div style="left:1650.5px;top:644px;width:242.5px;height:18px;background:#ffffff;"></div><div class="t" style="left:1406.2px;top:647.1px;line-height:12.10px;font-size:12.10px;color:#808080;">Custom Font Color</div><div style="left:1653.5px;top:647px;width:15px;height:12px;background:#000;"></div><div class="t" style="left:1675.5px;top:647.1px;line-height:12.10px;font-size:12.10px;color:#808080;">0; 0; 0</div><div class="t" style="left:1405.7px;top:666.4px;line-height:12.00px;font-size:12.00px;font-weight:700;color:#111;">Audio</div><div style="left:1403px;top:682px;width:246.5px;height:18px;background:#cbcbcb;"></div><div style="left:1650.5px;top:682px;width:242.5px;height:18px;background:#ffffff;"></div><div class="t" style="left:1406.2px;top:685.1px;line-height:12.10px;font-size:12.10px;color:#111;">Offset</div><div class="t" style="left:1654.0px;top:685.1px;line-height:12.10px;font-size:12.10px;color:#111;">+00:00:00:000</div><div style="left:1403px;top:701px;width:246.5px;height:18px;background:#cbcbcb;"></div><div style="left:1650.5px;top:701px;width:242.5px;height:18px;background:#ffffff;"></div><div class="t" style="left:1406.2px;top:704.1px;line-height:12.10px;font-size:12.10px;color:#111;">Gain</div><div class="t" style="left:1654.0px;top:704.1px;line-height:12.10px;font-size:12.10px;color:#111;">0.00 dB</div><div style="left:1403px;top:720px;width:246.5px;height:18px;background:#cbcbcb;"></div><div style="left:1650.5px;top:720px;width:242.5px;height:18px;background:#ffffff;"></div><div class="t" style="left:1406.2px;top:723.1px;line-height:12.10px;font-size:12.10px;color:#111;">Audio Output Slot</div><div class="t" style="left:1654.0px;top:723.1px;line-height:12.10px;font-size:12.10px;color:#111;">7</div><div style="left:1403px;top:739px;width:246.5px;height:48px;background:#cbcbcb;"></div><div style="left:1650.5px;top:739px;width:242.5px;height:48px;background:#ffffff;"></div><div class="t" style="left:1406.2px;top:757.1px;line-height:12.10px;font-size:12.10px;color:#111;">Audio Media</div><div class="t" style="left:1654.0px;top:742.7px;line-height:12.10px;font-size:12.10px;color:#111;">D:\_Demo projects\JTSE 2021</div><div class="t" style="left:1654.0px;top:757.5px;line-height:12.10px;font-size:12.10px;color:#111;">Planetarium\Planetarium 4 flux</div><div class="t" style="left:1654.0px;top:772.3px;line-height:12.10px;font-size:12.10px;color:#111;">movements\Audio Files\</div><div style="left:1403px;top:788px;width:246.5px;height:18px;background:#cbcbcb;"></div><div style="left:1650.5px;top:788px;width:242.5px;height:18px;background:#ffffff;"></div><div class="t" style="left:1406.2px;top:791.1px;line-height:12.10px;font-size:12.10px;color:#808080;">Sampling Rate</div><div class="t" style="left:1654.0px;top:791.1px;line-height:12.10px;font-size:12.10px;color:#808080;">48000 Hz</div><div class="t" style="left:1405.7px;top:810.4px;line-height:12.00px;font-size:12.00px;font-weight:700;color:#111;">Microphone / Input Switch</div><div class="t" style="left:1405.7px;top:829.4px;line-height:12.00px;font-size:12.00px;font-weight:700;color:#111;">TimeCode Generator</div><div class="t" style="left:1405.7px;top:848.4px;line-height:12.00px;font-size:12.00px;font-weight:700;color:#111;">MMC</div><div class="t" style="left:1405.7px;top:867.4px;line-height:12.00px;font-size:12.00px;font-weight:700;color:#111;">MIDI Command</div><div class="t" style="left:1405.7px;top:886.4px;line-height:12.00px;font-size:12.00px;font-weight:700;color:#111;">Sony P2 / RS422</div><div class="t" style="left:1405.7px;top:905.4px;line-height:12.00px;font-size:12.00px;font-weight:700;color:#111;">COM Command</div><div class="t" style="left:1405.7px;top:924.4px;line-height:12.00px;font-size:12.00px;font-weight:700;color:#111;">IP / OSC Command</div><div class="t" style="left:1405.7px;top:943.4px;line-height:12.00px;font-size:12.00px;font-weight:700;color:#111;">OSC Automation</div><div class="t" style="left:1405.7px;top:962.4px;line-height:12.00px;font-size:12.00px;font-weight:700;color:#111;">GPO</div><div class="t" style="left:1405.7px;top:981.4px;line-height:12.00px;font-size:12.00px;font-weight:700;color:#111;">Shell Command / Script / Batch</div><div class="t" style="left:1405.7px;top:1000.4px;line-height:12.00px;font-size:12.00px;font-weight:700;color:#111;">Mixer Automation</div><div class="t" style="left:1405.7px;top:1019.4px;line-height:12.00px;font-size:12.00px;font-weight:700;color:#111;">Mixer Direct Control</div><div class="t" style="left:1405.7px;top:1038.4px;line-height:12.00px;font-size:12.00px;font-weight:700;color:#111;">On-Air</div><div class="t" style="left:1405.7px;top:1057.4px;line-height:12.00px;font-size:12.00px;font-weight:700;color:#111;">REMOTE CONTROL: General MIDI Command</div><div class="t" style="left:1405.7px;top:1076.4px;line-height:12.00px;font-size:12.00px;font-weight:700;color:#111;">REMOTE CONTROL: IP / OSC Command</div></div><div style="left:1920px;top:0px;width:1516px;height:5px;background:#2a2a2a;"></div><div class="t" style="left:1958.0px;top:8.9px;line-height:12.10px;font-size:12.10px;color:#cfcfcf;">Panning Control</div><div style="left:1920px;top:25px;width:1516px;height:24px;background:#1c1c1c;"></div><div style="left:1922px;top:26px;width:55px;height:23px;background:#1f1f1f;"></div><div style="left:1977px;top:26px;width:2px;height:22px;background:#161616;"></div><div class="t" style="left:1942.0px;top:32.7px;line-height:11.50px;font-size:11.50px;color:#9a9a9a;">EN</div><div style="left:1980px;top:26px;width:58px;height:23px;background:#1f1f1f;"></div><div style="left:2038px;top:26px;width:2px;height:22px;background:#161616;"></div><div class="t" style="left:2002.1px;top:32.7px;line-height:11.50px;font-size:11.50px;color:#9a9a9a;">NL</div><div style="left:2041px;top:26px;width:56px;height:23px;background:#1f1f1f;"></div><div style="left:2097px;top:26px;width:2px;height:22px;background:#161616;"></div><div class="t" style="left:2061.8px;top:32.7px;line-height:11.50px;font-size:11.50px;color:#9a9a9a;">FR</div><div style="left:2100px;top:26px;width:58px;height:23px;background:#1f1f1f;"></div><div style="left:2158px;top:26px;width:2px;height:22px;background:#161616;"></div><div class="t" style="left:2104.6px;top:32.7px;line-height:11.50px;font-size:11.50px;color:#9a9a9a;">MU Mono</div><div style="left:2161px;top:26px;width:57px;height:23px;background:#1f1f1f;"></div><div style="left:2218px;top:26px;width:2px;height:22px;background:#161616;"></div><div class="t" style="left:2169.6px;top:32.7px;line-height:11.50px;font-size:11.50px;color:#9a9a9a;">EN Film</div><div style="left:2221px;top:26px;width:57px;height:23px;background:#1f1f1f;"></div><div style="left:2278px;top:26px;width:2px;height:22px;background:#161616;"></div><div class="t" style="left:2230.4px;top:32.7px;line-height:11.50px;font-size:11.50px;color:#9a9a9a;">NL Film</div><div style="left:2281px;top:26px;width:57px;height:23px;background:#1f1f1f;"></div><div style="left:2338px;top:26px;width:2px;height:22px;background:#161616;"></div><div class="t" style="left:2289.9px;top:32.7px;line-height:11.50px;font-size:11.50px;color:#9a9a9a;">FR Film</div><div style="left:2341px;top:26px;width:57px;height:23px;background:#1f1f1f;"></div><div style="left:2398px;top:26px;width:2px;height:22px;background:#161616;"></div><div class="t" style="left:2352.4px;top:32.7px;line-height:11.50px;font-size:11.50px;color:#9a9a9a;">MCS 1</div><div style="left:2400px;top:26px;width:79px;height:23px;background:#1f1f1f;"></div><div style="left:2479px;top:26px;width:2px;height:22px;background:#161616;"></div><div class="t" style="left:2404.2px;top:32.7px;line-height:11.50px;font-size:11.50px;color:#9a9a9a;">EN Film_copy</div><div style="left:2481px;top:26px;width:77px;height:23px;background:#1f1f1f;"></div><div style="left:2558px;top:26px;width:2px;height:22px;background:#161616;"></div><div class="t" style="left:2485.1px;top:32.7px;line-height:11.50px;font-size:11.50px;color:#9a9a9a;">NL Film_copy</div><div style="left:2560px;top:26px;width:78px;height:23px;background:#1f1f1f;"></div><div style="left:2638px;top:26px;width:2px;height:22px;background:#161616;"></div><div class="t" style="left:2564.0px;top:32.7px;line-height:11.50px;font-size:11.50px;color:#9a9a9a;">FR Film_copy</div><div style="left:2640px;top:26px;width:74px;height:23px;background:#1f1f1f;"></div><div style="left:2714px;top:26px;width:2px;height:22px;background:#161616;"></div><div class="t" style="left:2644.6px;top:32.7px;line-height:11.50px;font-size:11.50px;color:#9a9a9a;">MCS 1_copy</div><div style="left:2716px;top:26px;width:112px;height:23px;background:#1f1f1f;"></div><div style="left:2828px;top:26px;width:2px;height:22px;background:#161616;"></div><div class="t" style="left:2721.4px;top:32.7px;line-height:11.50px;font-size:11.50px;color:#9a9a9a;">EN Film_copy_copy</div><div style="left:2830px;top:26px;width:110px;height:23px;background:#1f1f1f;"></div><div style="left:2940px;top:26px;width:2px;height:22px;background:#161616;"></div><div class="t" style="left:2835.2px;top:32.7px;line-height:11.50px;font-size:11.50px;color:#9a9a9a;">NL Film_copy_copy</div><div style="left:2942px;top:26px;width:111px;height:23px;background:#1f1f1f;"></div><div style="left:3053px;top:26px;width:2px;height:22px;background:#161616;"></div><div class="t" style="left:2947.2px;top:32.7px;line-height:11.50px;font-size:11.50px;color:#9a9a9a;">FR Film_copy_copy</div><div style="left:3054px;top:26px;width:109px;height:23px;background:#1f1f1f;"></div><div style="left:3163px;top:26px;width:2px;height:22px;background:#161616;"></div><div class="t" style="left:3060.7px;top:32.7px;line-height:11.50px;font-size:11.50px;color:#9a9a9a;">MCS 1_copy_copy</div><div style="left:3164px;top:26px;width:145px;height:23px;background:#1f1f1f;"></div><div style="left:3309px;top:26px;width:2px;height:22px;background:#161616;"></div><div class="t" style="left:3170.5px;top:32.7px;line-height:11.50px;font-size:11.50px;color:#9a9a9a;">EN Film_copy_copy_copy</div><div style="left:3311px;top:26px;width:168px;height:23px;background:#1f1f1f;"></div><div style="left:3479px;top:26px;width:2px;height:22px;background:#161616;"></div><div class="t" style="left:3317.0px;top:32.7px;line-height:11.50px;font-size:11.50px;color:#9a9a9a;">NL Film_copy_copy_copy</div><div style="left:1938px;top:71px;width:1486px;height:725px;background:#131313;border-radius:6px;"></div><div style="left:2282px;top:857.0px;width:38px;height:11px;background:#151515;border-radius:2px;"></div><div class="t" style="left:2290.4px;top:856.8px;line-height:10.30px;font-size:10.30px;color:#f0b878;">-0 %</div><div class="t" style="left:2278.7px;top:874.9px;line-height:10.40px;font-size:10.40px;color:#bdbdbd;">Left/Right</div><div style="left:2347px;top:857.0px;width:38px;height:11px;background:#151515;border-radius:2px;"></div><div class="t" style="left:2352.5px;top:856.8px;line-height:10.30px;font-size:10.30px;color:#f0b878;">-69 %</div><div class="t" style="left:2341.1px;top:874.9px;line-height:10.40px;font-size:10.40px;color:#bdbdbd;">Front/Rear</div><div style="left:2411.6px;top:857.0px;width:38px;height:11px;background:#151515;border-radius:2px;"></div><div class="t" style="left:2418.9px;top:856.8px;line-height:10.30px;font-size:10.30px;color:#f0b878;">36 %</div><div class="t" style="left:2404.3px;top:874.9px;line-height:10.40px;font-size:10.40px;color:#bdbdbd;">Bottom/Top</div><div style="left:2476.8px;top:857.0px;width:38px;height:11px;background:#151515;border-radius:2px;"></div><div class="t" style="left:2484.1px;top:856.8px;line-height:10.30px;font-size:10.30px;color:#f0b878;">57 %</div><div class="t" style="left:2469.5px;top:874.9px;line-height:10.40px;font-size:10.40px;color:#bdbdbd;">Divergence</div><div style="left:2541.6px;top:857.0px;width:38px;height:11px;background:#151515;border-radius:2px;"></div><div class="t" style="left:2542.6px;top:856.8px;line-height:10.30px;font-size:10.30px;color:#f0b878;">-145 dB</div><div class="t" style="left:2551.1px;top:874.9px;line-height:10.40px;font-size:10.40px;color:#bdbdbd;">LFE</div><div style="left:2282px;top:946.5px;width:38px;height:11px;background:#151515;border-radius:2px;"></div><div class="t" style="left:2294.6px;top:946.3px;line-height:10.30px;font-size:10.30px;color:#f0b878;">0 °</div><div class="t" style="left:2289.4px;top:964.4px;line-height:10.40px;font-size:10.40px;color:#bdbdbd;">Pitch</div><div style="left:2347px;top:946.5px;width:38px;height:11px;background:#151515;border-radius:2px;"></div><div class="t" style="left:2359.6px;top:946.3px;line-height:10.30px;font-size:10.30px;color:#f0b878;">0 °</div><div class="t" style="left:2357.0px;top:964.4px;line-height:10.40px;font-size:10.40px;color:#bdbdbd;">Roll</div><div style="left:2411.6px;top:946.5px;width:38px;height:11px;background:#151515;border-radius:2px;"></div><div class="t" style="left:2424.2px;top:946.3px;line-height:10.30px;font-size:10.30px;color:#f0b878;">0 °</div><div class="t" style="left:2420.9px;top:964.4px;line-height:10.40px;font-size:10.40px;color:#bdbdbd;">Yaw</div><div style="left:2476.8px;top:946.5px;width:38px;height:11px;background:#151515;border-radius:2px;"></div><div class="t" style="left:2484.1px;top:946.3px;line-height:10.30px;font-size:10.30px;color:#f0b878;">67 %</div><div class="t" style="left:2467.8px;top:964.4px;line-height:10.40px;font-size:10.40px;color:#bdbdbd;">Source Size</div><div class="t" style="left:2765.0px;top:815.9px;line-height:10.40px;font-size:10.40px;color:#bdbdbd;">Display</div><div style="left:2851px;top:815px;width:58px;height:12px;background:#151515;border-radius:2px;"></div><div class="t" style="left:2857.3px;top:816.4px;line-height:10.40px;font-size:10.40px;color:#f0b878;">Top+Rear</div><div class="t" style="left:2765.0px;top:835.9px;line-height:10.40px;font-size:10.40px;color:#bdbdbd;">Dual Source</div><div style="left:2851px;top:835px;width:58px;height:12px;background:#151515;border-radius:2px;"></div><div class="t" style="left:2874.8px;top:836.4px;line-height:10.40px;font-size:10.40px;color:#f0b878;">---</div><div class="t" style="left:2765.0px;top:855.9px;line-height:10.40px;font-size:10.40px;color:#bdbdbd;">Virtual Pan Law</div><div style="left:2851px;top:855px;width:58px;height:12px;background:#151515;border-radius:2px;"></div><div class="t" style="left:2861.8px;top:856.4px;line-height:10.40px;font-size:10.40px;color:#f0b878;">Sin/Cos</div><div class="t" style="left:2765.0px;top:875.9px;line-height:10.40px;font-size:10.40px;color:#bdbdbd;">Divergence Type</div><div style="left:2851px;top:875px;width:58px;height:12px;background:#151515;border-radius:2px;"></div><div class="t" style="left:2873.4px;top:876.4px;line-height:10.40px;font-size:10.40px;color:#f0b878;">3D</div><div class="t" style="left:2930.0px;top:815.9px;line-height:10.40px;font-size:10.40px;color:#bdbdbd;">No Z Axis Bottom</div><div style="left:3017px;top:815px;width:13px;height:13px;background:#3a3a3a;border-radius:2px;"></div><div class="t" style="left:2930.0px;top:835.9px;line-height:10.40px;font-size:10.40px;color:#bdbdbd;">Atmos Snap</div><div style="left:3017px;top:835px;width:13px;height:13px;background:#3a3a3a;border-radius:2px;"></div><div class="t" style="left:2930.0px;top:855.9px;line-height:10.40px;font-size:10.40px;color:#bdbdbd;">Atmos Elevation</div><div style="left:3017px;top:855px;width:13px;height:13px;background:#e8d278;border-radius:2px;"></div><div class="t" style="left:2930.0px;top:875.9px;line-height:10.40px;font-size:10.40px;color:#bdbdbd;">Atmos Zones</div><div style="left:3016px;top:875px;width:68px;height:12px;background:#151515;border-radius:2px;"></div><div class="t" style="left:3044.2px;top:876.4px;line-height:10.40px;font-size:10.40px;color:#f0b878;">All</div><div style="left:1923px;top:998px;width:1513px;height:19px;background:#1c1c1c;"></div><div class="t" style="left:1931.0px;top:1002.9px;line-height:10.40px;font-size:10.40px;color:#8c8c8c;">TimeCode Reader 1</div><div class="t" style="left:1934.0px;top:1031.7px;line-height:10.20px;font-size:10.20px;font-weight:700;color:#f2f2f2;">TimeCode Source: Show Time</div><div class="t" style="left:2275.5px;top:1040.5px;line-height:153.00px;font-size:153.00px;color:#ffffff;transform:scaleY(1.048);transform-origin:0 130px;">00:00:28:08</div>
<svg style="left:0;top:0" width="3436" height="1200"><path d="M434 61.5 L445 72.5 M445 61.5 L434 72.5" stroke="#9a9a9a" stroke-width="1.1" fill="none"/><rect x="412.5" y="62.0" width="10.5" height="10.5" stroke="#9a9a9a" stroke-width="1.2" fill="none"/><path d="M391 67.5 L397 67.5" stroke="#9a9a9a" stroke-width="1.2"/><rect x="396" y="64.0" width="5.5" height="7" fill="#9a9a9a"/><path d="M156.9 97.9 L172.5 97.9 L180.1 106.0 L180.1 123.1 L156.9 123.1 Z" stroke="#9db1ab" stroke-width="2.8" fill="none" stroke-linejoin="miter"/><path d="M163.9 108.1 A6.6 6.6 0 1 0 173.1 108.1" stroke="#9db1ab" stroke-width="2.6" fill="none"/><path d="M168.5 104.0 L168.5 112.5" stroke="#9db1ab" stroke-width="2.6"/><path d="M221.9 97.9 L237.5 97.9 L245.1 106.0 L245.1 123.1 L221.9 123.1 Z" stroke="#9db1ab" stroke-width="2.8" fill="none" stroke-linejoin="miter"/><path d="M227.5 104.0 L227.5 121.0 L240.5 112.5 Z" fill="#9db1ab"/><path d="M286.9 97.9 L302.5 97.9 L310.1 106.0 L310.1 123.1 L286.9 123.1 Z" stroke="#9db1ab" stroke-width="2.8" fill="none" stroke-linejoin="miter"/><rect x="291.5" y="105.5" width="5" height="14" fill="#9db1ab"/><rect x="299.5" y="105.5" width="5" height="14" fill="#9db1ab"/><path d="M351.9 97.9 L367.5 97.9 L375.1 106.0 L375.1 123.1 L351.9 123.1 Z" stroke="#9db1ab" stroke-width="2.8" fill="none" stroke-linejoin="miter"/><rect x="356.0" y="105.5" width="15" height="14" fill="#9db1ab"/><path d="M432 152.5 L435 152.5 L439 149.0 L439 160.0 L435 156.5 L432 156.5 Z" fill="#000"/><path d="M441 152.0 Q442.8 154.5 441 157.0" stroke="#000" stroke-width="1.1" fill="none"/><path d="M443 150.3 Q445.8 154.5 443 158.7" stroke="#000" stroke-width="1.1" fill="none"/><path d="M432 189.5 L435 189.5 L439 186.0 L439 197.0 L435 193.5 L432 193.5 Z" fill="#000"/><path d="M441 189.0 Q442.8 191.5 441 194.0" stroke="#000" stroke-width="1.1" fill="none"/><path d="M443 187.3 Q445.8 191.5 443 195.7" stroke="#000" stroke-width="1.1" fill="none"/><path d="M432 226.5 L435 226.5 L439 223.0 L439 234.0 L435 230.5 L432 230.5 Z" fill="#000"/><path d="M441 226.0 Q442.8 228.5 441 231.0" stroke="#000" stroke-width="1.1" fill="none"/><path d="M443 224.3 Q445.8 228.5 443 232.7" stroke="#000" stroke-width="1.1" fill="none"/><path d="M432 263.5 L435 263.5 L439 260.0 L439 271.0 L435 267.5 L432 267.5 Z" fill="#000"/><path d="M441 263.0 Q442.8 265.5 441 268.0" stroke="#000" stroke-width="1.1" fill="none"/><path d="M443 261.3 Q445.8 265.5 443 269.7" stroke="#000" stroke-width="1.1" fill="none"/><path d="M432 300.5 L435 300.5 L439 297.0 L439 308.0 L435 304.5 L432 304.5 Z" fill="#000"/><path d="M441 300.0 Q442.8 302.5 441 305.0" stroke="#000" stroke-width="1.1" fill="none"/><path d="M443 298.3 Q445.8 302.5 443 306.7" stroke="#000" stroke-width="1.1" fill="none"/><path d="M434 404.5 L445 415.5 M445 404.5 L434 415.5" stroke="#0c0c0c" stroke-width="1.1" fill="none"/><path d="M413 410.5 L419 410.5" stroke="#0c0c0c" stroke-width="1.2"/><rect x="418" y="407.0" width="5.5" height="7" fill="#0c0c0c"/><path d="M156.9 440.9 L172.5 440.9 L180.1 449.0 L180.1 466.1 L156.9 466.1 Z" stroke="#1e1e1e" stroke-width="2.8" fill="none" stroke-linejoin="miter"/><path d="M163.9 451.1 A6.6 6.6 0 1 0 173.1 451.1" stroke="#1e1e1e" stroke-width="2.6" fill="none"/><path d="M168.5 447.0 L168.5 455.5" stroke="#1e1e1e" stroke-width="2.6"/><path d="M221.9 440.9 L237.5 440.9 L245.1 449.0 L245.1 466.1 L221.9 466.1 Z" stroke="#1e1e1e" stroke-width="2.8" fill="none" stroke-linejoin="miter"/><path d="M227.5 447.0 L227.5 464.0 L240.5 455.5 Z" fill="#1e1e1e"/><path d="M286.9 440.9 L302.5 440.9 L310.1 449.0 L310.1 466.1 L286.9 466.1 Z" stroke="#9db1ab" stroke-width="2.8" fill="none" stroke-linejoin="miter"/><rect x="291.5" y="448.5" width="5" height="14" fill="#9db1ab"/><rect x="299.5" y="448.5" width="5" height="14" fill="#9db1ab"/><path d="M351.9 440.9 L367.5 440.9 L375.1 449.0 L375.1 466.1 L351.9 466.1 Z" stroke="#9db1ab" stroke-width="2.8" fill="none" stroke-linejoin="miter"/><rect x="356.0" y="448.5" width="15" height="14" fill="#9db1ab"/><clipPath id="cl1"><rect x="0" y="480" width="460" height="255"/></clipPath><g clip-path="url(#cl1)"><path d="M408 495.5 L411 495.5 L415 492.0 L415 503.0 L411 499.5 L408 499.5 Z" fill="#000"/><path d="M417 495.0 Q418.8 497.5 417 500.0" stroke="#000" stroke-width="1.1" fill="none"/><path d="M419 493.3 Q421.8 497.5 419 501.7" stroke="#000" stroke-width="1.1" fill="none"/><path d="M408 532.5 L411 532.5 L415 529.0 L415 540.0 L411 536.5 L408 536.5 Z" fill="#000"/><path d="M417 532.0 Q418.8 534.5 417 537.0" stroke="#000" stroke-width="1.1" fill="none"/><path d="M419 530.3 Q421.8 534.5 419 538.7" stroke="#000" stroke-width="1.1" fill="none"/><path d="M408 569.5 L411 569.5 L415 566.0 L415 577.0 L411 573.5 L408 573.5 Z" fill="#000"/><path d="M417 569.0 Q418.8 571.5 417 574.0" stroke="#000" stroke-width="1.1" fill="none"/><path d="M419 567.3 Q421.8 571.5 419 575.7" stroke="#000" stroke-width="1.1" fill="none"/><path d="M408 606.5 L411 606.5 L415 603.0 L415 614.0 L411 610.5 L408 610.5 Z" fill="#000"/><path d="M417 606.0 Q418.8 608.5 417 611.0" stroke="#000" stroke-width="1.1" fill="none"/><path d="M419 604.3 Q421.8 608.5 419 612.7" stroke="#000" stroke-width="1.1" fill="none"/><path d="M408 643.5 L411 643.5 L415 640.0 L415 651.0 L411 647.5 L408 647.5 Z" fill="#000"/><path d="M417 643.0 Q418.8 645.5 417 648.0" stroke="#000" stroke-width="1.1" fill="none"/><path d="M419 641.3 Q421.8 645.5 419 649.7" stroke="#000" stroke-width="1.1" fill="none"/><path d="M408 680.5 L411 680.5 L415 677.0 L415 688.0 L411 684.5 L408 684.5 Z" fill="#000"/><path d="M417 680.0 Q418.8 682.5 417 685.0" stroke="#000" stroke-width="1.1" fill="none"/><path d="M419 678.3 Q421.8 682.5 419 686.7" stroke="#000" stroke-width="1.1" fill="none"/><path d="M408 717.5 L411 717.5 L415 714.0 L415 725.0 L411 721.5 L408 721.5 Z" fill="#000"/><path d="M417 717.0 Q418.8 719.5 417 722.0" stroke="#000" stroke-width="1.1" fill="none"/><path d="M419 715.3 Q421.8 719.5 419 723.7" stroke="#000" stroke-width="1.1" fill="none"/></g><path d="M440.5 499.5 L448.5 499.5 L444.5 495 Z" fill="#222" opacity="0.7"/><path d="M440.5 721.5 L448.5 721.5 L444.5 726 Z" fill="#222" opacity="0.7"/><path d="M434 747.5 L445 758.5 M445 747.5 L434 758.5" stroke="#9a9a9a" stroke-width="1.1" fill="none"/><rect x="412.5" y="748.0" width="10.5" height="10.5" stroke="#9a9a9a" stroke-width="1.2" fill="none"/><path d="M391 753.5 L397 753.5" stroke="#9a9a9a" stroke-width="1.2"/><rect x="396" y="750.0" width="5.5" height="7" fill="#9a9a9a"/><path d="M432 779.5 L435 779.5 L439 776.0 L439 787.0 L435 783.5 L432 783.5 Z" fill="#000"/><path d="M441 779.0 Q442.8 781.5 441 784.0" stroke="#000" stroke-width="1.1" fill="none"/><path d="M443 777.3 Q445.8 781.5 443 785.7" stroke="#000" stroke-width="1.1" fill="none"/><path d="M432 816.5 L435 816.5 L439 813.0 L439 824.0 L435 820.5 L432 820.5 Z" fill="#000"/><path d="M441 816.0 Q442.8 818.5 441 821.0" stroke="#000" stroke-width="1.1" fill="none"/><path d="M443 814.3 Q445.8 818.5 443 822.7" stroke="#000" stroke-width="1.1" fill="none"/><path d="M432 853.5 L435 853.5 L439 850.0 L439 861.0 L435 857.5 L432 857.5 Z" fill="#000"/><path d="M441 853.0 Q442.8 855.5 441 858.0" stroke="#000" stroke-width="1.1" fill="none"/><path d="M443 851.3 Q445.8 855.5 443 859.7" stroke="#000" stroke-width="1.1" fill="none"/><path d="M890 61.5 L901 72.5 M901 61.5 L890 72.5" stroke="#1a1a1a" stroke-width="1.1" fill="none"/><rect x="868.5" y="62.0" width="10.5" height="10.5" stroke="#1a1a1a" stroke-width="1.2" fill="none"/><path d="M847 67.5 L853 67.5" stroke="#1a1a1a" stroke-width="1.2"/><rect x="852" y="64.0" width="5.5" height="7" fill="#1a1a1a"/><path d="M611.9 97.9 L627.5 97.9 L635.1 106.0 L635.1 123.1 L611.9 123.1 Z" stroke="#9db1ab" stroke-width="2.8" fill="none" stroke-linejoin="miter"/><path d="M618.9 108.1 A6.6 6.6 0 1 0 628.1 108.1" stroke="#9db1ab" stroke-width="2.6" fill="none"/><path d="M623.5 104.0 L623.5 112.5" stroke="#9db1ab" stroke-width="2.6"/><path d="M676.9 97.9 L692.5 97.9 L700.1 106.0 L700.1 123.1 L676.9 123.1 Z" stroke="#9db1ab" stroke-width="2.8" fill="none" stroke-linejoin="miter"/><path d="M682.5 104.0 L682.5 121.0 L695.5 112.5 Z" fill="#9db1ab"/><path d="M741.9 97.9 L757.5 97.9 L765.1 106.0 L765.1 123.1 L741.9 123.1 Z" stroke="#1e1e1e" stroke-width="2.8" fill="none" stroke-linejoin="miter"/><rect x="746.5" y="105.5" width="5" height="14" fill="#1e1e1e"/><rect x="754.5" y="105.5" width="5" height="14" fill="#1e1e1e"/><path d="M806.9 97.9 L822.5 97.9 L830.1 106.0 L830.1 123.1 L806.9 123.1 Z" stroke="#1e1e1e" stroke-width="2.8" fill="none" stroke-linejoin="miter"/><rect x="811.0" y="105.5" width="15" height="14" fill="#1e1e1e"/><clipPath id="cl2"><rect x="460" y="140" width="432" height="423"/></clipPath><g clip-path="url(#cl2)"><path d="M863 152.5 L866 152.5 L870 149.0 L870 160.0 L866 156.5 L863 156.5 Z" fill="#000"/><path d="M872 152.0 Q873.8 154.5 872 157.0" stroke="#000" stroke-width="1.1" fill="none"/><path d="M874 150.3 Q876.8 154.5 874 158.7" stroke="#000" stroke-width="1.1" fill="none"/><path d="M863 189.5 L866 189.5 L870 186.0 L870 197.0 L866 193.5 L863 193.5 Z" fill="#000"/><path d="M872 189.0 Q873.8 191.5 872 194.0" stroke="#000" stroke-width="1.1" fill="none"/><path d="M874 187.3 Q876.8 191.5 874 195.7" stroke="#000" stroke-width="1.1" fill="none"/><path d="M863 226.5 L866 226.5 L870 223.0 L870 234.0 L866 230.5 L863 230.5 Z" fill="#000"/><path d="M872 226.0 Q873.8 228.5 872 231.0" stroke="#000" stroke-width="1.1" fill="none"/><path d="M874 224.3 Q876.8 228.5 874 232.7" stroke="#000" stroke-width="1.1" fill="none"/><path d="M863 263.5 L866 263.5 L870 260.0 L870 271.0 L866 267.5 L863 267.5 Z" fill="#000"/><path d="M872 263.0 Q873.8 265.5 872 268.0" stroke="#000" stroke-width="1.1" fill="none"/><path d="M874 261.3 Q876.8 265.5 874 269.7" stroke="#000" stroke-width="1.1" fill="none"/><path d="M863 300.5 L866 300.5 L870 297.0 L870 308.0 L866 304.5 L863 304.5 Z" fill="#000"/><path d="M872 300.0 Q873.8 302.5 872 305.0" stroke="#000" stroke-width="1.1" fill="none"/><path d="M874 298.3 Q876.8 302.5 874 306.7" stroke="#000" stroke-width="1.1" fill="none"/><path d="M863 337.5 L866 337.5 L870 334.0 L870 345.0 L866 341.5 L863 341.5 Z" fill="#000"/><path d="M872 337.0 Q873.8 339.5 872 342.0" stroke="#000" stroke-width="1.1" fill="none"/><path d="M874 335.3 Q876.8 339.5 874 343.7" stroke="#000" stroke-width="1.1" fill="none"/><path d="M845 374.5 L848 374.5 L852 371.0 L852 382.0 L848 378.5 L845 378.5 Z" fill="#000"/><path d="M854 374.0 Q855.8 376.5 854 379.0" stroke="#000" stroke-width="1.1" fill="none"/><path d="M856 372.3 Q858.8 376.5 856 380.7" stroke="#000" stroke-width="1.1" fill="none"/><polygon points="876.0,377.0 873.4,378.8 873.9,381.9 870.8,381.4 869.0,384.0 867.2,381.4 864.1,381.9 864.6,378.8 862.0,377.0 864.6,375.2 864.1,372.1 867.2,372.6 869.0,370.0 870.8,372.6 873.9,372.1 873.4,375.2" fill="#111"/><circle cx="869" cy="377.0" r="2" fill="#cec6b9"/><path d="M863 411.5 L866 411.5 L870 408.0 L870 419.0 L866 415.5 L863 415.5 Z" fill="#000"/><path d="M872 411.0 Q873.8 413.5 872 416.0" stroke="#000" stroke-width="1.1" fill="none"/><path d="M874 409.3 Q876.8 413.5 874 417.7" stroke="#000" stroke-width="1.1" fill="none"/><path d="M863 448.5 L866 448.5 L870 445.0 L870 456.0 L866 452.5 L863 452.5 Z" fill="#000"/><path d="M872 448.0 Q873.8 450.5 872 453.0" stroke="#000" stroke-width="1.1" fill="none"/><path d="M874 446.3 Q876.8 450.5 874 454.7" stroke="#000" stroke-width="1.1" fill="none"/><path d="M863 485.5 L866 485.5 L870 482.0 L870 493.0 L866 489.5 L863 489.5 Z" fill="#000"/><path d="M872 485.0 Q873.8 487.5 872 490.0" stroke="#000" stroke-width="1.1" fill="none"/><path d="M874 483.3 Q876.8 487.5 874 491.7" stroke="#000" stroke-width="1.1" fill="none"/><path d="M863 522.5 L866 522.5 L870 519.0 L870 530.0 L866 526.5 L863 526.5 Z" fill="#000"/><path d="M872 522.0 Q873.8 524.5 872 527.0" stroke="#000" stroke-width="1.1" fill="none"/><path d="M874 520.3 Q876.8 524.5 874 528.7" stroke="#000" stroke-width="1.1" fill="none"/><path d="M863 559.5 L866 559.5 L870 556.0 L870 567.0 L866 563.5 L863 563.5 Z" fill="#000"/><path d="M872 559.0 Q873.8 561.5 872 564.0" stroke="#000" stroke-width="1.1" fill="none"/><path d="M874 557.3 Q876.8 561.5 874 565.7" stroke="#000" stroke-width="1.1" fill="none"/></g><path d="M895.5 156.5 L903.5 156.5 L899.5 152 Z" fill="#334" opacity="0.7"/><path d="M895.5 549.5 L903.5 549.5 L899.5 554 Z" fill="#334" opacity="0.7"/><path d="M890 577.5 L901 588.5 M901 577.5 L890 588.5" stroke="#9a9a9a" stroke-width="1.1" fill="none"/><rect x="868.5" y="578.0" width="10.5" height="10.5" stroke="#9a9a9a" stroke-width="1.2" fill="none"/><path d="M847 583.5 L853 583.5" stroke="#9a9a9a" stroke-width="1.2"/><rect x="852" y="580.0" width="5.5" height="7" fill="#9a9a9a"/><path d="M611.9 612.9 L627.5 612.9 L635.1 621.0 L635.1 638.1 L611.9 638.1 Z" stroke="#1e1e1e" stroke-width="2.8" fill="none" stroke-linejoin="miter"/><path d="M618.9 623.1 A6.6 6.6 0 1 0 628.1 623.1" stroke="#1e1e1e" stroke-width="2.6" fill="none"/><path d="M623.5 619.0 L623.5 627.5" stroke="#1e1e1e" stroke-width="2.6"/><path d="M676.9 612.9 L692.5 612.9 L700.1 621.0 L700.1 638.1 L676.9 638.1 Z" stroke="#1e1e1e" stroke-width="2.8" fill="none" stroke-linejoin="miter"/><path d="M682.5 619.0 L682.5 636.0 L695.5 627.5 Z" fill="#1e1e1e"/><path d="M741.9 612.9 L757.5 612.9 L765.1 621.0 L765.1 638.1 L741.9 638.1 Z" stroke="#9db1ab" stroke-width="2.8" fill="none" stroke-linejoin="miter"/><rect x="746.5" y="620.5" width="5" height="14" fill="#9db1ab"/><rect x="754.5" y="620.5" width="5" height="14" fill="#9db1ab"/><path d="M806.9 612.9 L822.5 612.9 L830.1 621.0 L830.1 638.1 L806.9 638.1 Z" stroke="#9db1ab" stroke-width="2.8" fill="none" stroke-linejoin="miter"/><rect x="811.0" y="620.5" width="15" height="14" fill="#9db1ab"/><clipPath id="cl3"><rect x="460" y="650" width="432" height="428"/></clipPath><g clip-path="url(#cl3)"><path d="M863 667.5 L866 667.5 L870 664.0 L870 675.0 L866 671.5 L863 671.5 Z" fill="#000"/><path d="M872 667.0 Q873.8 669.5 872 672.0" stroke="#000" stroke-width="1.1" fill="none"/><path d="M874 665.3 Q876.8 669.5 874 673.7" stroke="#000" stroke-width="1.1" fill="none"/><path d="M863 704.5 L866 704.5 L870 701.0 L870 712.0 L866 708.5 L863 708.5 Z" fill="#000"/><path d="M872 704.0 Q873.8 706.5 872 709.0" stroke="#000" stroke-width="1.1" fill="none"/><path d="M874 702.3 Q876.8 706.5 874 710.7" stroke="#000" stroke-width="1.1" fill="none"/><path d="M863 741.5 L866 741.5 L870 738.0 L870 749.0 L866 745.5 L863 745.5 Z" fill="#000"/><path d="M872 741.0 Q873.8 743.5 872 746.0" stroke="#000" stroke-width="1.1" fill="none"/><path d="M874 739.3 Q876.8 743.5 874 747.7" stroke="#000" stroke-width="1.1" fill="none"/><path d="M863 778.5 L866 778.5 L870 775.0 L870 786.0 L866 782.5 L863 782.5 Z" fill="#000"/><path d="M872 778.0 Q873.8 780.5 872 783.0" stroke="#000" stroke-width="1.1" fill="none"/><path d="M874 776.3 Q876.8 780.5 874 784.7" stroke="#000" stroke-width="1.1" fill="none"/><path d="M863 815.5 L866 815.5 L870 812.0 L870 823.0 L866 819.5 L863 819.5 Z" fill="#000"/><path d="M872 815.0 Q873.8 817.5 872 820.0" stroke="#000" stroke-width="1.1" fill="none"/><path d="M874 813.3 Q876.8 817.5 874 821.7" stroke="#000" stroke-width="1.1" fill="none"/><path d="M863 852.5 L866 852.5 L870 849.0 L870 860.0 L866 856.5 L863 856.5 Z" fill="#000"/><path d="M872 852.0 Q873.8 854.5 872 857.0" stroke="#000" stroke-width="1.1" fill="none"/><path d="M874 850.3 Q876.8 854.5 874 858.7" stroke="#000" stroke-width="1.1" fill="none"/><path d="M863 889.5 L866 889.5 L870 886.0 L870 897.0 L866 893.5 L863 893.5 Z" fill="#000"/><path d="M872 889.0 Q873.8 891.5 872 894.0" stroke="#000" stroke-width="1.1" fill="none"/><path d="M874 887.3 Q876.8 891.5 874 895.7" stroke="#000" stroke-width="1.1" fill="none"/><path d="M863 926.5 L866 926.5 L870 923.0 L870 934.0 L866 930.5 L863 930.5 Z" fill="#000"/><path d="M872 926.0 Q873.8 928.5 872 931.0" stroke="#000" stroke-width="1.1" fill="none"/><path d="M874 924.3 Q876.8 928.5 874 932.7" stroke="#000" stroke-width="1.1" fill="none"/><path d="M863 963.5 L866 963.5 L870 960.0 L870 971.0 L866 967.5 L863 967.5 Z" fill="#000"/><path d="M872 963.0 Q873.8 965.5 872 968.0" stroke="#000" stroke-width="1.1" fill="none"/><path d="M874 961.3 Q876.8 965.5 874 969.7" stroke="#000" stroke-width="1.1" fill="none"/><path d="M863 1000.5 L866 1000.5 L870 997.0 L870 1008.0 L866 1004.5 L863 1004.5 Z" fill="#000"/><path d="M872 1000.0 Q873.8 1002.5 872 1005.0" stroke="#000" stroke-width="1.1" fill="none"/><path d="M874 998.3 Q876.8 1002.5 874 1006.7" stroke="#000" stroke-width="1.1" fill="none"/><path d="M863 1037.5 L866 1037.5 L870 1034.0 L870 1045.0 L866 1041.5 L863 1041.5 Z" fill="#000"/><path d="M872 1037.0 Q873.8 1039.5 872 1042.0" stroke="#000" stroke-width="1.1" fill="none"/><path d="M874 1035.3 Q876.8 1039.5 874 1043.7" stroke="#000" stroke-width="1.1" fill="none"/><path d="M863 1074.5 L866 1074.5 L870 1071.0 L870 1082.0 L866 1078.5 L863 1078.5 Z" fill="#000"/><path d="M872 1074.0 Q873.8 1076.5 872 1079.0" stroke="#000" stroke-width="1.1" fill="none"/><path d="M874 1072.3 Q876.8 1076.5 874 1080.7" stroke="#000" stroke-width="1.1" fill="none"/></g><path d="M895.5 672.5 L903.5 672.5 L899.5 668 Z" fill="#334" opacity="0.7"/><path d="M895.5 1063.5 L903.5 1063.5 L899.5 1068 Z" fill="#334" opacity="0.7"/><path d="M1357 61.5 L1368 72.5 M1368 61.5 L1357 72.5" stroke="#1a1a1a" stroke-width="1.1" fill="none"/><rect x="1335.5" y="62.0" width="10.5" height="10.5" stroke="#1a1a1a" stroke-width="1.2" fill="none"/><path d="M1314 67.5 L1320 67.5" stroke="#1a1a1a" stroke-width="1.2"/><rect x="1319" y="64.0" width="5.5" height="7" fill="#1a1a1a"/><path d="M1357 541.5 L1368 552.5 M1368 541.5 L1357 552.5" stroke="#9a9a9a" stroke-width="1.1" fill="none"/><rect x="1335.5" y="542.0" width="10.5" height="10.5" stroke="#9a9a9a" stroke-width="1.2" fill="none"/><path d="M1314 547.5 L1320 547.5" stroke="#9a9a9a" stroke-width="1.2"/><rect x="1319" y="544.0" width="5.5" height="7" fill="#9a9a9a"/><path d="M1255 591 L1258 591 L1262 587.5 L1262 598.5 L1258 595 L1255 595 Z" fill="#000"/><path d="M1264 590.5 Q1265.8 593 1264 595.5" stroke="#000" stroke-width="1.1" fill="none"/><path d="M1266 588.8 Q1268.8 593 1266 597.2" stroke="#000" stroke-width="1.1" fill="none"/><path d="M1287 590 L1287 605 M1289 590 L1301 590 L1301 600 L1289 600 Z" stroke="#111" stroke-width="1.5" fill="none"/><path d="M1316 597.5 L1322 597.5 M1323 592 L1334 592 L1334 602 L1323 602 Z M1323 592 L1323 605" stroke="#111" stroke-width="1.5" fill="none"/><path d="M1353 607 L1369 607 L1369 599 L1353 599 Z M1356 599 L1356 595 A5 5 0 0 1 1366 593" stroke="#111" stroke-width="1.5" fill="none"/><clipPath id="cl4"><rect x="922" y="618" width="457" height="24"/></clipPath><g clip-path="url(#cl4)"><path d="M930.5 622 L930.5 642" stroke="#888" stroke-width="1"/><path d="M938.5 622 L938.5 629" stroke="#777" stroke-width="1"/><path d="M946.5 622 L946.5 629" stroke="#777" stroke-width="1"/><path d="M954.5 622 L954.5 629" stroke="#777" stroke-width="1"/><path d="M962.5 622 L962.5 629" stroke="#777" stroke-width="1"/><path d="M970.5 622 L970.5 629" stroke="#777" stroke-width="1"/><path d="M978.5 622 L978.5 629" stroke="#777" stroke-width="1"/><path d="M986.5 622 L986.5 629" stroke="#777" stroke-width="1"/><path d="M994.5 622 L994.5 629" stroke="#777" stroke-width="1"/><path d="M1002.5 622 L1002.5 629" stroke="#777" stroke-width="1"/><path d="M1010.5 622 L1010.5 642" stroke="#888" stroke-width="1"/><path d="M1018.5 622 L1018.5 629" stroke="#777" stroke-width="1"/><path d="M1026.5 622 L1026.5 629" stroke="#777" stroke-width="1"/><path d="M1034.5 622 L1034.5 629" stroke="#777" stroke-width="1"/><path d="M1042.5 622 L1042.5 629" stroke="#777" stroke-width="1"/><path d="M1050.5 622 L1050.5 629" stroke="#777" stroke-width="1"/><path d="M1058.5 622 L1058.5 629" stroke="#777" stroke-width="1"/><path d="M1066.5 622 L1066.5 629" stroke="#777" stroke-width="1"/><path d="M1074.5 622 L1074.5 629" stroke="#777" stroke-width="1"/><path d="M1082.5 622 L1082.5 629" stroke="#777" stroke-width="1"/><path d="M1090.5 622 L1090.5 642" stroke="#888" stroke-width="1"/><path d="M1098.5 622 L1098.5 629" stroke="#777" stroke-width="1"/><path d="M1106.5 622 L1106.5 629" stroke="#777" stroke-width="1"/><path d="M1114.5 622 L1114.5 629" stroke="#777" stroke-width="1"/><path d="M1122.5 622 L1122.5 629" stroke="#777" stroke-width="1"/><path d="M1130.5 622 L1130.5 629" stroke="#777" stroke-width="1"/><path d="M1138.5 622 L1138.5 629" stroke="#777" stroke-width="1"/><path d="M1146.5 622 L1146.5 629" stroke="#777" stroke-width="1"/><path d="M1154.5 622 L1154.5 629" stroke="#777" stroke-width="1"/><path d="M1162.5 622 L1162.5 629" stroke="#777" stroke-width="1"/><path d="M1170.5 622 L1170.5 642" stroke="#888" stroke-width="1"/><path d="M1178.5 622 L1178.5 629" stroke="#777" stroke-width="1"/><path d="M1186.5 622 L1186.5 629" stroke="#777" stroke-width="1"/><path d="M1194.5 622 L1194.5 629" stroke="#777" stroke-width="1"/><path d="M1202.5 622 L1202.5 629" stroke="#777" stroke-width="1"/><path d="M1210.5 622 L1210.5 629" stroke="#777" stroke-width="1"/><path d="M1218.5 622 L1218.5 629" stroke="#777" stroke-width="1"/><path d="M1226.5 622 L1226.5 629" stroke="#777" stroke-width="1"/><path d="M1234.5 622 L1234.5 629" stroke="#777" stroke-width="1"/><path d="M1242.5 622 L1242.5 629" stroke="#777" stroke-width="1"/><path d="M1250.5 622 L1250.5 642" stroke="#888" stroke-width="1"/><path d="M1258.5 622 L1258.5 629" stroke="#777" stroke-width="1"/><path d="M1266.5 622 L1266.5 629" stroke="#777" stroke-width="1"/><path d="M1274.5 622 L1274.5 629" stroke="#777" stroke-width="1"/><path d="M1282.5 622 L1282.5 629" stroke="#777" stroke-width="1"/><path d="M1290.5 622 L1290.5 629" stroke="#777" stroke-width="1"/><path d="M1298.5 622 L1298.5 629" stroke="#777" stroke-width="1"/><path d="M1306.5 622 L1306.5 629" stroke="#777" stroke-width="1"/><path d="M1314.5 622 L1314.5 629" stroke="#777" stroke-width="1"/><path d="M1322.5 622 L1322.5 629" stroke="#777" stroke-width="1"/><path d="M1330.5 622 L1330.5 642" stroke="#888" stroke-width="1"/><path d="M1338.5 622 L1338.5 629" stroke="#777" stroke-width="1"/><path d="M1346.5 622 L1346.5 629" stroke="#777" stroke-width="1"/><path d="M1354.5 622 L1354.5 629" stroke="#777" stroke-width="1"/><path d="M1362.5 622 L1362.5 629" stroke="#777" stroke-width="1"/><path d="M1370.5 622 L1370.5 629" stroke="#777" stroke-width="1"/></g><path d="M930 821.5 L1370 821.5" stroke="#c8c2b6" stroke-width="1"/><path d="M931.5 810 L931.5 830 M932.5 807 L932.5 838 M933.5 796 L933.5 848 M935.5 794 L935.5 861 M936.5 785 L936.5 851 M938.5 808 L938.5 834 M940.5 787 L940.5 851 M941.5 785 L941.5 854 M943.5 735 L943.5 903 M948.5 788 L948.5 849 M949.5 774 L949.5 873 M950.5 784 L950.5 851 M952.5 778 L952.5 861 M954.5 786 L954.5 858 M957.5 810 L957.5 831 M959.5 816 L959.5 825 M971.5 815 L971.5 828 M972.5 807 L972.5 832 M973.5 781 L973.5 853 M974.5 808 L974.5 837 M979.5 814 L979.5 827 M983.5 794 L983.5 849 M984.5 810 L984.5 836 M985.5 805 L985.5 841 M986.5 798 L986.5 844 M987.5 793 L987.5 848 M988.5 793 L988.5 844 M989.5 773 L989.5 867 M990.5 800 L990.5 845 M991.5 767 L991.5 890 M995.5 799 L995.5 845 M996.5 795 L996.5 853 M997.5 749 L997.5 890 M1001.5 747 L1001.5 871 M1002.5 777 L1002.5 858 M1003.5 802 L1003.5 842 M1004.5 766 L1004.5 877 M1005.5 797 L1005.5 847 M1006.5 799 L1006.5 843 M1007.5 806 L1007.5 838 M1012.5 815 L1012.5 828 M1013.5 794 L1013.5 852 M1014.5 796 L1014.5 839 M1015.5 807 L1015.5 834 M1017.5 789 L1017.5 857 M1021.5 809 L1021.5 838 M1022.5 801 L1022.5 837 M1023.5 815 L1023.5 828 M958.5 745 L958.5 900 M935.5 748 L935.5 889 M935.5 745 L935.5 901 M974.5 764 L974.5 872 M1000.5 716 L1000.5 923 M988.5 701 L988.5 928 M994.5 698 L994.5 935 M1019.5 752 L1019.5 883 " stroke="#9ee8a2" stroke-width="1"/><path d="M1026.5 780 L1026.5 865 M1029.5 733 L1029.5 905 M1030.5 799 L1030.5 846 M1055.5 773 L1055.5 866 M1056.5 720 L1056.5 906 M1058.5 791 L1058.5 850 M1060.5 799 L1060.5 847 M1062.5 800 L1062.5 841 M1063.5 799 L1063.5 843 M1065.5 805 L1065.5 834 M1066.5 815 L1066.5 828 M1067.5 813 L1067.5 829 M1068.5 802 L1068.5 841 M1069.5 786 L1069.5 846 M1070.5 798 L1070.5 848 M1071.5 787 L1071.5 857 M1072.5 788 L1072.5 849 M1073.5 811 L1073.5 831 M1074.5 805 L1074.5 841 M1075.5 806 L1075.5 838 M1077.5 748 L1077.5 886 M1078.5 759 L1078.5 877 M1080.5 797 L1080.5 840 M1085.5 813 L1085.5 830 M1086.5 768 L1086.5 879 M1087.5 762 L1087.5 884 M1088.5 792 L1088.5 849 M1089.5 749 L1089.5 886 M1090.5 742 L1090.5 881 M1091.5 747 L1091.5 896 M1093.5 804 L1093.5 835 M1109.5 809 L1109.5 835 M1110.5 799 L1110.5 838 M1111.5 795 L1111.5 846 M1113.5 806 L1113.5 838 M1114.5 796 L1114.5 845 M1115.5 779 L1115.5 876 M1124.5 802 L1124.5 842 M1126.5 799 L1126.5 841 M1128.5 778 L1128.5 864 M1129.5 795 L1129.5 852 M1130.5 755 L1130.5 882 M1131.5 783 L1131.5 860 M1132.5 783 L1132.5 868 M1134.5 734 L1134.5 913 M1135.5 792 L1135.5 860 M1136.5 752 L1136.5 899 M1137.5 801 L1137.5 845 M1138.5 747 L1138.5 908 M1139.5 782 L1139.5 853 M1150.5 799 L1150.5 839 M1153.5 737 L1153.5 881 M1155.5 782 L1155.5 854 M1156.5 782 L1156.5 862 M1158.5 762 L1158.5 888 M1159.5 793 L1159.5 849 M1160.5 801 L1160.5 840 M1161.5 758 L1161.5 879 M1162.5 785 L1162.5 855 M1164.5 787 L1164.5 856 M1165.5 795 L1165.5 845 M1175.5 813 L1175.5 830 M1178.5 815 L1178.5 828 M1179.5 810 L1179.5 831 M1181.5 800 L1181.5 841 M1182.5 795 L1182.5 848 M1183.5 811 L1183.5 831 M1185.5 812 L1185.5 831 M1188.5 799 L1188.5 847 M1189.5 776 L1189.5 869 M1191.5 798 L1191.5 854 M1193.5 812 L1193.5 830 M1195.5 810 L1195.5 832 M1196.5 814 L1196.5 828 M1211.5 806 L1211.5 837 M1214.5 769 L1214.5 871 M1216.5 748 L1216.5 923 M1217.5 791 L1217.5 843 M1225.5 795 L1225.5 845 M1226.5 784 L1226.5 851 M1227.5 799 L1227.5 841 M1228.5 805 L1228.5 839 M1229.5 797 L1229.5 844 M1230.5 771 L1230.5 870 M1231.5 799 L1231.5 852 M1232.5 769 L1232.5 871 M1233.5 767 L1233.5 876 M1234.5 796 L1234.5 855 M1235.5 745 L1235.5 897 M1237.5 766 L1237.5 887 M1240.5 759 L1240.5 877 M1241.5 791 L1241.5 856 M1242.5 798 L1242.5 851 M1243.5 748 L1243.5 901 M1245.5 779 L1245.5 869 M1247.5 738 L1247.5 890 M1248.5 795 L1248.5 840 M1250.5 780 L1250.5 856 M1251.5 805 L1251.5 840 M1254.5 794 L1254.5 846 M1255.5 804 L1255.5 836 M1267.5 806 L1267.5 836 M1268.5 801 L1268.5 837 M1270.5 752 L1270.5 875 M1271.5 796 L1271.5 847 M1272.5 799 L1272.5 845 M1273.5 750 L1273.5 882 M1274.5 749 L1274.5 885 M1275.5 771 L1275.5 879 M1276.5 757 L1276.5 900 M1277.5 800 L1277.5 848 M1278.5 794 L1278.5 843 M1279.5 761 L1279.5 881 M1280.5 760 L1280.5 874 M1282.5 748 L1282.5 896 M1283.5 729 L1283.5 897 M1284.5 737 L1284.5 904 M1285.5 698 L1285.5 931 M1286.5 732 L1286.5 898 M1287.5 788 L1287.5 857 M1288.5 794 L1288.5 851 M1290.5 797 L1290.5 843 M1291.5 749 L1291.5 889 M1292.5 753 L1292.5 869 M1297.5 779 L1297.5 863 M1300.5 799 L1300.5 845 M1301.5 802 L1301.5 840 M1303.5 798 L1303.5 842 M1310.5 788 L1310.5 856 M1311.5 799 L1311.5 840 M1314.5 789 L1314.5 852 M1315.5 803 L1315.5 840 M1317.5 780 L1317.5 868 M1319.5 800 L1319.5 836 M1320.5 759 L1320.5 867 M1322.5 810 L1322.5 832 M1323.5 805 L1323.5 834 M1351.5 808 L1351.5 831 M1352.5 807 L1352.5 835 M1354.5 798 L1354.5 841 M1356.5 765 L1356.5 885 M1358.5 771 L1358.5 869 M1359.5 800 L1359.5 845 M1361.5 786 L1361.5 874 M1362.5 792 L1362.5 846 M1363.5 776 L1363.5 867 M1364.5 769 L1364.5 872 M1365.5 785 L1365.5 852 M1366.5 789 L1366.5 845 M1369.5 793 L1369.5 852 M1028.5 719 L1028.5 920 M1055.5 702 L1055.5 933 M1070.5 779 L1070.5 857 M1080.5 715 L1080.5 926 M1088.5 728 L1088.5 908 M1111.5 761 L1111.5 883 M1133.5 697 L1133.5 936 M1140.5 698 L1140.5 943 M1153.5 728 L1153.5 904 M1161.5 732 L1161.5 913 M1194.5 772 L1194.5 866 M1182.5 774 L1182.5 861 M1215.5 699 L1215.5 944 M1236.5 714 L1236.5 946 M1234.5 705 L1234.5 924 M1249.5 713 L1249.5 947 M1302.5 699 L1302.5 926 M1284.5 708 L1284.5 946 M1289.5 698 L1289.5 928 M1268.5 705 L1268.5 951 M1313.5 734 L1313.5 899 M1312.5 743 L1312.5 903 M1354.5 719 L1354.5 919 M1356.5 722 L1356.5 926 " stroke="#d3ccc0" stroke-width="1"/><path d="M1024 622 L1024 995" stroke="#000" stroke-width="2"/><path d="M1020 626 L1020 640 L1028 633 Z" fill="#000"/><path d="M933 1006 L933 1015 L928 1010.5 Z" fill="#333"/><path d="M1267 1006 L1267 1015 L1272 1010.5 Z" fill="#333"/><circle cx="1299" cy="1009" r="5" stroke="#111" stroke-width="1.6" fill="none"/><path d="M1295 1013 L1290 1018 M1296.5 1009 L1301.5 1009 M1299 1006.5 L1299 1011.5" stroke="#111" stroke-width="1.6"/><circle cx="1324" cy="1009" r="5" stroke="#111" stroke-width="1.6" fill="none"/><path d="M1320 1013 L1315 1018 M1321.5 1009 L1326.5 1009" stroke="#111" stroke-width="1.6"/><circle cx="1350" cy="1009" r="5" stroke="#111" stroke-width="1.6" fill="none"/><path d="M1346 1013 L1341 1018" stroke="#111" stroke-width="1.6"/><path d="M1364 1011 L1382 1011 M1367 1004 L1367 1018 M1371 1002 L1371 1020 M1375 1005 L1375 1017 M1379 1003 L1379 1019" stroke="#111" stroke-width="2"/><path d="M948 1044 L948 1061 L960 1052.5 Z" fill="#222"/><rect x="1010" y="1045" width="5" height="14" fill="#222"/><rect x="1018" y="1045" width="5" height="14" fill="#222"/><rect x="1075" y="1045" width="15" height="14" fill="#222"/><rect x="1145" y="1044" width="4" height="17" fill="#b0b0b0"/><path d="M1151 1044 L1151 1061 L1163 1052.5 Z" fill="#b0b0b0"/><path d="M16.3 14.6 A7.2 7.2 0 1 0 24.7 14.6" stroke="#b8b8b8" stroke-width="1.1" fill="none"/><path d="M20.5 11.5 L20.5 19" stroke="#b8b8b8" stroke-width="1.1"/><path d="M1848 17.5 L1855.5 17.5" stroke="#aaa" stroke-width="1"/><rect x="1872.5" y="12.5" width="7" height="7" stroke="#aaa" stroke-width="1" fill="none"/><path d="M1896 12.5 L1903.5 20 M1903.5 12.5 L1896 20" stroke="#aaa" stroke-width="1"/><path d="M59 1162.5 L81 1153 L81 1172 Z" fill="#222"/><path d="M148 1162.5 L126 1153 L126 1172 Z" fill="#222"/><path d="M201 1155 A10 10 0 1 0 214 1155" stroke="#1a1a1a" stroke-width="3" fill="none"/><path d="M207.5 1149 L207.5 1162" stroke="#1a1a1a" stroke-width="3"/><path d="M278.5 1151 L268.5 1172 L288.5 1172 Z" fill="#222"/><path d="M343.5 1174 L333.5 1153 L353.5 1153 Z" fill="#222"/><path d="M406.5 1155 L406.5 1148.5 L419 1148.5 L427.5 1157 L427.5 1170.5 L421 1170.5" stroke="#222" stroke-width="2.5" fill="none"/><path d="M400.5 1154.5 L413 1154.5 L421 1162.5 L421 1177 L400.5 1177 Z" stroke="#222" stroke-width="2.5" fill="none"/><path d="M480 1153 L480 1172 L493 1162.5 Z" fill="#222"/><rect x="542" y="1155" width="5" height="14.3" fill="#222"/><rect x="552" y="1155" width="5" height="14.3" fill="#222"/><rect x="607" y="1155" width="15" height="14.3" fill="#222"/><path d="M1862 67.5 L1868 67.5" stroke="#9a9a9a" stroke-width="1.2"/><rect x="1867" y="64" width="5.5" height="7" fill="#9a9a9a"/><path d="M1890 61.5 L1901 72.5 M1901 61.5 L1890 72.5" stroke="#9a9a9a" stroke-width="1.1" fill="none"/><clipPath id="cpgrid"><rect x="1380" y="100" width="540" height="978"/></clipPath><g clip-path="url(#cpgrid)"><rect x="1391.5" y="122.5" width="8" height="8" stroke="#222" stroke-width="1" fill="none"/><path d="M1393.5 126.5 L1397.5 126.5" stroke="#222" stroke-width="1"/><path d="M1389 135.5 L1893 135.5" stroke="#c8c8c8" stroke-width="1"/><path d="M1403 154.5 L1893 154.5" stroke="#a0a0a0" stroke-width="1"/><path d="M1403 173.5 L1893 173.5" stroke="#a0a0a0" stroke-width="1"/><path d="M1403 222.5 L1893 222.5" stroke="#a0a0a0" stroke-width="1"/><path d="M1403 241.5 L1893 241.5" stroke="#a0a0a0" stroke-width="1"/><path d="M1403 260.5 L1893 260.5" stroke="#a0a0a0" stroke-width="1"/><path d="M1403 279.5 L1893 279.5" stroke="#a0a0a0" stroke-width="1"/><path d="M1403 298.5 L1893 298.5" stroke="#a0a0a0" stroke-width="1"/><path d="M1403 317.5 L1893 317.5" stroke="#a0a0a0" stroke-width="1"/><path d="M1403 336.5 L1893 336.5" stroke="#a0a0a0" stroke-width="1"/><path d="M1403 355.5 L1893 355.5" stroke="#a0a0a0" stroke-width="1"/><path d="M1403 374.5 L1893 374.5" stroke="#a0a0a0" stroke-width="1"/><path d="M1403 453.5 L1893 453.5" stroke="#a0a0a0" stroke-width="1"/><path d="M1403 472.5 L1893 472.5" stroke="#a0a0a0" stroke-width="1"/><path d="M1403 491.5 L1893 491.5" stroke="#a0a0a0" stroke-width="1"/><path d="M1403 510.5 L1893 510.5" stroke="#a0a0a0" stroke-width="1"/><rect x="1391.5" y="516.5" width="8" height="8" stroke="#222" stroke-width="1" fill="none"/><path d="M1393.5 520.5 L1397.5 520.5" stroke="#222" stroke-width="1"/><path d="M1395.5 518.5 L1395.5 522.5" stroke="#222" stroke-width="1"/><path d="M1389 529.5 L1893 529.5" stroke="#c8c8c8" stroke-width="1"/><rect x="1391.5" y="535.5" width="8" height="8" stroke="#222" stroke-width="1" fill="none"/><path d="M1393.5 539.5 L1397.5 539.5" stroke="#222" stroke-width="1"/><path d="M1389 548.5 L1893 548.5" stroke="#c8c8c8" stroke-width="1"/><path d="M1403 567.5 L1893 567.5" stroke="#a0a0a0" stroke-width="1"/><rect x="1391.5" y="573.5" width="8" height="8" stroke="#222" stroke-width="1" fill="none"/><path d="M1393.5 577.5 L1397.5 577.5" stroke="#222" stroke-width="1"/><path d="M1395.5 575.5 L1395.5 579.5" stroke="#222" stroke-width="1"/><path d="M1389 586.5 L1893 586.5" stroke="#c8c8c8" stroke-width="1"/><rect x="1391.5" y="592.5" width="8" height="8" stroke="#222" stroke-width="1" fill="none"/><path d="M1393.5 596.5 L1397.5 596.5" stroke="#222" stroke-width="1"/><path d="M1389 605.5 L1893 605.5" stroke="#c8c8c8" stroke-width="1"/><path d="M1403 624.5 L1893 624.5" stroke="#a0a0a0" stroke-width="1"/><path d="M1403 643.5 L1893 643.5" stroke="#a0a0a0" stroke-width="1"/><path d="M1403 662.5 L1893 662.5" stroke="#a0a0a0" stroke-width="1"/><rect x="1391.5" y="668.5" width="8" height="8" stroke="#222" stroke-width="1" fill="none"/><path d="M1393.5 672.5 L1397.5 672.5" stroke="#222" stroke-width="1"/><path d="M1389 681.5 L1893 681.5" stroke="#c8c8c8" stroke-width="1"/><path d="M1403 700.5 L1893 700.5" stroke="#a0a0a0" stroke-width="1"/><path d="M1403 719.5 L1893 719.5" stroke="#a0a0a0" stroke-width="1"/><path d="M1403 738.5 L1893 738.5" stroke="#a0a0a0" stroke-width="1"/><path d="M1403 787.5 L1893 787.5" stroke="#a0a0a0" stroke-width="1"/><path d="M1403 806.5 L1893 806.5" stroke="#a0a0a0" stroke-width="1"/><rect x="1391.5" y="812.5" width="8" height="8" stroke="#222" stroke-width="1" fill="none"/><path d="M1393.5 816.5 L1397.5 816.5" stroke="#222" stroke-width="1"/><path d="M1395.5 814.5 L1395.5 818.5" stroke="#222" stroke-width="1"/><path d="M1389 825.5 L1893 825.5" stroke="#c8c8c8" stroke-width="1"/><rect x="1391.5" y="831.5" width="8" height="8" stroke="#222" stroke-width="1" fill="none"/><path d="M1393.5 835.5 L1397.5 835.5" stroke="#222" stroke-width="1"/><path d="M1395.5 833.5 L1395.5 837.5" stroke="#222" stroke-width="1"/><path d="M1389 844.5 L1893 844.5" stroke="#c8c8c8" stroke-width="1"/><rect x="1391.5" y="850.5" width="8" height="8" stroke="#222" stroke-width="1" fill="none"/><path d="M1393.5 854.5 L1397.5 854.5" stroke="#222" stroke-width="1"/><path d="M1395.5 852.5 L1395.5 856.5" stroke="#222" stroke-width="1"/><path d="M1389 863.5 L1893 863.5" stroke="#c8c8c8" stroke-width="1"/><rect x="1391.5" y="869.5" width="8" height="8" stroke="#222" stroke-width="1" fill="none"/><path d="M1393.5 873.5 L1397.5 873.5" stroke="#222" stroke-width="1"/><path d="M1395.5 871.5 L1395.5 875.5" stroke="#222" stroke-width="1"/><path d="M1389 882.5 L1893 882.5" stroke="#c8c8c8" stroke-width="1"/><rect x="1391.5" y="888.5" width="8" height="8" stroke="#222" stroke-width="1" fill="none"/><path d="M1393.5 892.5 L1397.5 892.5" stroke="#222" stroke-width="1"/><path d="M1395.5 890.5 L1395.5 894.5" stroke="#222" stroke-width="1"/><path d="M1389 901.5 L1893 901.5" stroke="#c8c8c8" stroke-width="1"/><rect x="1391.5" y="907.5" width="8" height="8" stroke="#222" stroke-width="1" fill="none"/><path d="M1393.5 911.5 L1397.5 911.5" stroke="#222" stroke-width="1"/><path d="M1395.5 909.5 L1395.5 913.5" stroke="#222" stroke-width="1"/><path d="M1389 920.5 L1893 920.5" stroke="#c8c8c8" stroke-width="1"/><rect x="1391.5" y="926.5" width="8" height="8" stroke="#222" stroke-width="1" fill="none"/><path d="M1393.5 930.5 L1397.5 930.5" stroke="#222" stroke-width="1"/><path d="M1395.5 928.5 L1395.5 932.5" stroke="#222" stroke-width="1"/><path d="M1389 939.5 L1893 939.5" stroke="#c8c8c8" stroke-width="1"/><rect x="1391.5" y="945.5" width="8" height="8" stroke="#222" stroke-width="1" fill="none"/><path d="M1393.5 949.5 L1397.5 949.5" stroke="#222" stroke-width="1"/><path d="M1395.5 947.5 L1395.5 951.5" stroke="#222" stroke-width="1"/><path d="M1389 958.5 L1893 958.5" stroke="#c8c8c8" stroke-width="1"/><rect x="1391.5" y="964.5" width="8" height="8" stroke="#222" stroke-width="1" fill="none"/><path d="M1393.5 968.5 L1397.5 968.5" stroke="#222" stroke-width="1"/><path d="M1395.5 966.5 L1395.5 970.5" stroke="#222" stroke-width="1"/><path d="M1389 977.5 L1893 977.5" stroke="#c8c8c8" stroke-width="1"/><rect x="1391.5" y="983.5" width="8" height="8" stroke="#222" stroke-width="1" fill="none"/><path d="M1393.5 987.5 L1397.5 987.5" stroke="#222" stroke-width="1"/><path d="M1395.5 985.5 L1395.5 989.5" stroke="#222" stroke-width="1"/><path d="M1389 996.5 L1893 996.5" stroke="#c8c8c8" stroke-width="1"/><rect x="1391.5" y="1002.5" width="8" height="8" stroke="#222" stroke-width="1" fill="none"/><path d="M1393.5 1006.5 L1397.5 1006.5" stroke="#222" stroke-width="1"/><path d="M1395.5 1004.5 L1395.5 1008.5" stroke="#222" stroke-width="1"/><path d="M1389 1015.5 L1893 1015.5" stroke="#c8c8c8" stroke-width="1"/><rect x="1391.5" y="1021.5" width="8" height="8" stroke="#222" stroke-width="1" fill="none"/><path d="M1393.5 1025.5 L1397.5 1025.5" stroke="#222" stroke-width="1"/><path d="M1395.5 1023.5 L1395.5 1027.5" stroke="#222" stroke-width="1"/><path d="M1389 1034.5 L1893 1034.5" stroke="#c8c8c8" stroke-width="1"/><rect x="1391.5" y="1040.5" width="8" height="8" stroke="#222" stroke-width="1" fill="none"/><path d="M1393.5 1044.5 L1397.5 1044.5" stroke="#222" stroke-width="1"/><path d="M1395.5 1042.5 L1395.5 1046.5" stroke="#222" stroke-width="1"/><path d="M1389 1053.5 L1893 1053.5" stroke="#c8c8c8" stroke-width="1"/><rect x="1391.5" y="1059.5" width="8" height="8" stroke="#222" stroke-width="1" fill="none"/><path d="M1393.5 1063.5 L1397.5 1063.5" stroke="#222" stroke-width="1"/><path d="M1395.5 1061.5 L1395.5 1065.5" stroke="#222" stroke-width="1"/><path d="M1389 1072.5 L1893 1072.5" stroke="#c8c8c8" stroke-width="1"/><rect x="1391.5" y="1078.5" width="8" height="8" stroke="#222" stroke-width="1" fill="none"/><path d="M1393.5 1082.5 L1397.5 1082.5" stroke="#222" stroke-width="1"/><path d="M1395.5 1080.5 L1395.5 1084.5" stroke="#222" stroke-width="1"/><path d="M1389 1091.5 L1893 1091.5" stroke="#c8c8c8" stroke-width="1"/></g><rect x="1926.5" y="9" width="10" height="10" stroke="#aaa" stroke-width="1" fill="none" rx="1"/><path d="M1933 11.5 L1929.5 14 L1933 16.5" stroke="#aaa" stroke-width="1" fill="none"/><rect x="1941.5" y="9" width="10" height="10" stroke="#aaa" stroke-width="1" fill="none" rx="1"/><path d="M1945 11.5 L1948.5 14 L1945 16.5" stroke="#aaa" stroke-width="1" fill="none"/><path d="M3425 10 L3433 18 M3433 10 L3425 18" stroke="#bbb" stroke-width="1"/><defs><radialGradient id="gSph" cx="50%" cy="50%" r="50%"><stop offset="0" stop-color="#fff" stop-opacity="0.14"/><stop offset="0.6" stop-color="#fff" stop-opacity="0.085"/><stop offset="1" stop-color="#fff" stop-opacity="0.04"/></radialGradient><radialGradient id="gRed" cx="50%" cy="50%" r="50%"><stop offset="0" stop-color="#e8463a" stop-opacity="0.9"/><stop offset="0.65" stop-color="#b8352c" stop-opacity="0.55"/><stop offset="1" stop-color="#902820" stop-opacity="0.04"/></radialGradient><radialGradient id="gYel" cx="50%" cy="50%" r="50%"><stop offset="0" stop-color="#ecb844" stop-opacity="0.85"/><stop offset="0.65" stop-color="#c89838" stop-opacity="0.55"/><stop offset="1" stop-color="#a07828" stop-opacity="0.04"/></radialGradient><linearGradient id="gBandF" x1="0" y1="0" x2="0" y2="1"><stop offset="0" stop-color="#4d4d4d"/><stop offset="1" stop-color="#494949"/></linearGradient><linearGradient id="gBandT" x1="0" y1="0" x2="0" y2="1"><stop offset="0" stop-color="#5e5e5e"/><stop offset="1" stop-color="#555555"/></linearGradient><filter id="fBlur" x="-5%" y="-5%" width="110%" height="110%"><feGaussianBlur stdDeviation="1.2"/></filter></defs><rect x="2146" y="279" width="310" height="310" fill="#0a0a0a"/><rect x="2906" y="279" width="310" height="310" fill="#0a0a0a"/><clipPath id="clipfront"><rect x="1992" y="124.5" width="618" height="618"/></clipPath><g clip-path="url(#clipfront)"><circle cx="2127.5" cy="174.6" r="178" fill="url(#gSph)"/><circle cx="2301" cy="174.6" r="178" fill="url(#gSph)"/><circle cx="2474.5" cy="174.6" r="178" fill="url(#gSph)"/><circle cx="2127.5" cy="427" r="178" fill="url(#gSph)"/><circle cx="2474.5" cy="427" r="178" fill="url(#gSph)"/></g><path d="M1992 124.5 L2610 124.5 L2610 742.5 L1992 742.5 Z M2030.5 163.5 L2571.5 163.5 L2571.5 703 L2030.5 703 Z M2069 202 L2533 202 L2533 665 L2069 665 Z M2108 240.5 L2494 240.5 L2494 626 L2108 626 Z M2146 279 L2456 279 L2456 589 L2146 589 Z M1992 124.5 L2146 279 M1992 742.5 L2146 589 M2148 124.5 L2223.5 279 M2148 742.5 L2223.5 589 M1992 280.5 L2146 354.5 M1992 588 L2146 512 M2610 124.5 L2456 279 M2610 742.5 L2456 589 M2454 124.5 L2378.5 279 M2454 742.5 L2378.5 589 M2610 280.5 L2456 354.5 M2610 588 L2456 512 M2301 124.5 L2301 279 M2301 589 L2301 742.5 M1992 434 L2146 434 M2456 434 L2610 434 " stroke="rgba(210,210,210,0.27)" stroke-width="1" fill="none"/><rect x="2121.5" y="170.5" width="357" height="65" rx="3" fill="url(#gBandF)" filter="url(#fBlur)"/><clipPath id="cliptop"><rect x="2752" y="124.5" width="618" height="618"/></clipPath><g clip-path="url(#cliptop)"><circle cx="2906" cy="350" r="175" fill="url(#gSph)"/><circle cx="3216" cy="350" r="175" fill="url(#gSph)"/><circle cx="2957.5" cy="377.5" r="178" fill="url(#gSph)"/><circle cx="3061" cy="377.5" r="178" fill="url(#gSph)"/><circle cx="3164" cy="377.5" r="178" fill="url(#gSph)"/></g><path d="M2752 124.5 L3370 124.5 L3370 742.5 L2752 742.5 Z M2790.5 163.5 L3331.5 163.5 L3331.5 703 L2790.5 703 Z M2829 202 L3293 202 L3293 665 L2829 665 Z M2868 240.5 L3254 240.5 L3254 626 L2868 626 Z M2906 279 L3216 279 L3216 589 L2906 589 Z M2752 124.5 L2906 279 M2752 742.5 L2906 589 M2908 124.5 L2983.5 279 M2908 742.5 L2983.5 589 M2752 280.5 L2906 354.5 M2752 588 L2906 512 M3370 124.5 L3216 279 M3370 742.5 L3216 589 M3214 124.5 L3138.5 279 M3214 742.5 L3138.5 589 M3370 280.5 L3216 354.5 M3370 588 L3216 512 M3061 124.5 L3061 279 M3061 589 L3061 742.5 M2752 433 L3370 433 " stroke="rgba(210,210,210,0.27)" stroke-width="1" fill="none"/><rect x="2945" y="370" width="232" height="128" rx="2" fill="url(#gBandT)" filter="url(#fBlur)"/><text x="2301" y="93.5" font-size="10.5" text-anchor="middle" fill="#3c3c3c" font-family="Liberation Sans">FRONT</text><text x="3061" y="93.5" font-size="10.5" text-anchor="middle" fill="#3c3c3c" font-family="Liberation Sans">TOP</text><text x="2301" y="783.5" font-size="10.5" text-anchor="middle" fill="#3c3c3c" font-family="Liberation Sans">REAR</text><text x="3061" y="783.5" font-size="10.5" text-anchor="middle" fill="#3c3c3c" font-family="Liberation Sans">BOTTOM</text><circle cx="1992" cy="124.5" r="49" fill="url(#gRed)" opacity="1"/><circle cx="2610" cy="124.5" r="49" fill="url(#gRed)" opacity="1"/><circle cx="1992" cy="742.5" r="49" fill="url(#gRed)" opacity="1"/><circle cx="2610" cy="742.5" r="49" fill="url(#gRed)" opacity="1"/><circle cx="2069" cy="201.5" r="49" fill="url(#gYel)" opacity="1"/><circle cx="2301" cy="201.5" r="49" fill="url(#gYel)" opacity="0.6"/><circle cx="2532" cy="201.5" r="49" fill="url(#gYel)" opacity="1"/><circle cx="2069" cy="433" r="49" fill="url(#gYel)" opacity="0.75"/><circle cx="2532" cy="433" r="49" fill="url(#gYel)" opacity="0.75"/><circle cx="2069" cy="665" r="49" fill="url(#gYel)" opacity="1"/><circle cx="2532" cy="665" r="49" fill="url(#gYel)" opacity="1"/><g opacity="1"><rect x="1979.75" y="117.0" width="24.5" height="15" fill="#e9473d" rx="1.5"/><text x="1992" y="128.28" font-size="10.5" text-anchor="middle" fill="#1a1010" font-family="Liberation Sans">Ltf</text></g><g opacity="1"><rect x="2597.75" y="117.0" width="24.5" height="15" fill="#e9473d" rx="1.5"/><text x="2610" y="128.28" font-size="10.5" text-anchor="middle" fill="#1a1010" font-family="Liberation Sans">Rtf</text></g><g opacity="1"><rect x="1979.75" y="735.0" width="24.5" height="15" fill="#e9473d" rx="1.5"/><text x="1992" y="746.28" font-size="10.5" text-anchor="middle" fill="#1a1010" font-family="Liberation Sans">Ltr</text></g><g opacity="1"><rect x="2597.75" y="735.0" width="24.5" height="15" fill="#e9473d" rx="1.5"/><text x="2610" y="746.28" font-size="10.5" text-anchor="middle" fill="#1a1010" font-family="Liberation Sans">Rtr</text></g><g opacity="0.85"><rect x="2059.5" y="195.0" width="19" height="13" fill="#e8ac36" rx="1.5"/><text x="2069" y="204.38" font-size="8" text-anchor="middle" fill="#1a1010" font-family="Liberation Sans">L</text></g><g opacity="0.7"><rect x="2291.5" y="195.0" width="19" height="13" fill="#e8ac36" rx="1.5"/><text x="2301" y="204.38" font-size="8" text-anchor="middle" fill="#1a1010" font-family="Liberation Sans">C</text></g><g opacity="0.85"><rect x="2522.5" y="195.0" width="19" height="13" fill="#e8ac36" rx="1.5"/><text x="2532" y="204.38" font-size="8" text-anchor="middle" fill="#1a1010" font-family="Liberation Sans">R</text></g><g opacity="0.85"><rect x="2059.5" y="426.5" width="19" height="13" fill="#e8ac36" rx="1.5"/><text x="2069" y="435.88" font-size="8" text-anchor="middle" fill="#1a1010" font-family="Liberation Sans">Lss</text></g><g opacity="0.85"><rect x="2522.5" y="426.5" width="19" height="13" fill="#e8ac36" rx="1.5"/><text x="2532" y="435.88" font-size="8" text-anchor="middle" fill="#1a1010" font-family="Liberation Sans">Rss</text></g><g opacity="0.95"><rect x="2059.5" y="658.5" width="19" height="13" fill="#e8ac36" rx="1.5"/><text x="2069" y="667.88" font-size="8" text-anchor="middle" fill="#1a1010" font-family="Liberation Sans">Lrs</text></g><g opacity="0.95"><rect x="2522.5" y="658.5" width="19" height="13" fill="#e8ac36" rx="1.5"/><text x="2532" y="667.88" font-size="8" text-anchor="middle" fill="#1a1010" font-family="Liberation Sans">Rrs</text></g><circle cx="2127" cy="174.6" r="5.5" fill="#d9d9d9"/><text x="2127" y="166.1" font-size="9.8" text-anchor="middle" fill="#e0e0e0" font-family="Liberation Sans">L</text><circle cx="2301" cy="174.6" r="5.5" fill="#d9d9d9"/><text x="2301" y="166.1" font-size="9.8" text-anchor="middle" fill="#e0e0e0" font-family="Liberation Sans">C</text><circle cx="2473" cy="174.6" r="5.5" fill="#d9d9d9"/><text x="2473" y="166.1" font-size="9.8" text-anchor="middle" fill="#e0e0e0" font-family="Liberation Sans">R</text><circle cx="2127" cy="427" r="5.5" fill="#d9d9d9"/><text x="2127" y="418.5" font-size="9.8" text-anchor="middle" fill="#e0e0e0" font-family="Liberation Sans">Lrs</text><circle cx="2473" cy="427" r="5.5" fill="#d9d9d9"/><text x="2473" y="418.5" font-size="9.8" text-anchor="middle" fill="#e0e0e0" font-family="Liberation Sans">Rrs</text><circle cx="2752" cy="124.5" r="49" fill="url(#gRed)" opacity="1"/><circle cx="3370" cy="124.5" r="49" fill="url(#gRed)" opacity="1"/><circle cx="2906" cy="279" r="49" fill="url(#gRed)" opacity="0.55"/><circle cx="3215" cy="279" r="49" fill="url(#gRed)" opacity="0.55"/><circle cx="2752" cy="433" r="49" fill="url(#gYel)" opacity="1"/><circle cx="2829" cy="433" r="49" fill="url(#gYel)" opacity="0.7"/><circle cx="2906" cy="433" r="49" fill="url(#gYel)" opacity="0.55"/><circle cx="3061" cy="433" r="49" fill="url(#gYel)" opacity="0.4"/><circle cx="3216" cy="433" r="49" fill="url(#gYel)" opacity="0.55"/><circle cx="3292" cy="433" r="49" fill="url(#gYel)" opacity="0.7"/><circle cx="3370" cy="433" r="49" fill="url(#gYel)" opacity="1"/><g opacity="1"><rect x="2739.75" y="117.0" width="24.5" height="15" fill="#e9473d" rx="1.5"/><text x="2752" y="128.28" font-size="10.5" text-anchor="middle" fill="#1a1010" font-family="Liberation Sans">Ltr</text></g><g opacity="1"><rect x="3357.75" y="117.0" width="24.5" height="15" fill="#e9473d" rx="1.5"/><text x="3370" y="128.28" font-size="10.5" text-anchor="middle" fill="#1a1010" font-family="Liberation Sans">Rtr</text></g><g opacity="0.55"><rect x="2896.5" y="272.5" width="19" height="13" fill="#e9473d" rx="1.5"/><text x="2906" y="281.88" font-size="8" text-anchor="middle" fill="#1a1010" font-family="Liberation Sans">Ltf</text></g><g opacity="0.55"><rect x="3205.5" y="272.5" width="19" height="13" fill="#e9473d" rx="1.5"/><text x="3215" y="281.88" font-size="8" text-anchor="middle" fill="#1a1010" font-family="Liberation Sans">Rtf</text></g><g opacity="1"><rect x="2739.75" y="425.5" width="24.5" height="15" fill="#e8ac36" rx="1.5"/><text x="2752" y="436.78" font-size="10.5" text-anchor="middle" fill="#1a1010" font-family="Liberation Sans">Lrs</text></g><g opacity="0.8"><rect x="2819.5" y="426.5" width="19" height="13" fill="#e8ac36" rx="1.5"/><text x="2829" y="435.88" font-size="8" text-anchor="middle" fill="#1a1010" font-family="Liberation Sans">Lss</text></g><g opacity="0.5"><rect x="2896.5" y="426.5" width="19" height="13" fill="#e8ac36" rx="1.5"/><text x="2906" y="435.88" font-size="8" text-anchor="middle" fill="#1a1010" font-family="Liberation Sans">L</text></g><g opacity="0.4"><rect x="3051.5" y="426.5" width="19" height="13" fill="#e8ac36" rx="1.5"/><text x="3061" y="435.88" font-size="8" text-anchor="middle" fill="#1a1010" font-family="Liberation Sans">C</text></g><g opacity="0.5"><rect x="3206.5" y="426.5" width="19" height="13" fill="#e8ac36" rx="1.5"/><text x="3216" y="435.88" font-size="8" text-anchor="middle" fill="#1a1010" font-family="Liberation Sans">R</text></g><g opacity="0.8"><rect x="3282.5" y="426.5" width="19" height="13" fill="#e8ac36" rx="1.5"/><text x="3292" y="435.88" font-size="8" text-anchor="middle" fill="#1a1010" font-family="Liberation Sans">Rss</text></g><g opacity="1"><rect x="3357.75" y="425.5" width="24.5" height="15" fill="#e8ac36" rx="1.5"/><text x="3370" y="436.78" font-size="10.5" text-anchor="middle" fill="#1a1010" font-family="Liberation Sans">Rrs</text></g><circle cx="2906" cy="350" r="5.5" fill="#d9d9d9"/><text x="2906" y="341.5" font-size="9.8" text-anchor="middle" fill="#e0e0e0" font-family="Liberation Sans">Lrs</text><circle cx="3213" cy="350" r="5.5" fill="#d9d9d9"/><text x="3213" y="341.5" font-size="9.8" text-anchor="middle" fill="#e0e0e0" font-family="Liberation Sans">Rrs</text><circle cx="2957" cy="377.5" r="4.5" fill="#d9d9d9"/><text x="2957" y="369.0" font-size="9.8" text-anchor="middle" fill="#e0e0e0" font-family="Liberation Sans">L</text><circle cx="3060" cy="377.5" r="4.5" fill="#d9d9d9"/><text x="3060" y="369.0" font-size="9.8" text-anchor="middle" fill="#e0e0e0" font-family="Liberation Sans">C</text><circle cx="3163" cy="377.5" r="4.5" fill="#d9d9d9"/><text x="3163" y="369.0" font-size="9.8" text-anchor="middle" fill="#e0e0e0" font-family="Liberation Sans">R</text><defs><radialGradient id="gKnob" cx="40%" cy="30%" r="70%"><stop offset="0" stop-color="#555"/><stop offset="1" stop-color="#333"/></radialGradient></defs><circle cx="2301" cy="833.5" r="18.5" fill="#111"/><circle cx="2301" cy="833.5" r="15" fill="url(#gKnob)"/><path d="M2298.6 816.2 A17.5 17.5 0 0 1 2303.4 816.2" stroke="#c8c8c8" stroke-width="2.2" fill="none"/><path d="M2301.0 827.5 L2301.0 822.5" stroke="#ddd" stroke-width="1.2"/><circle cx="2366" cy="833.5" r="18.5" fill="#111"/><circle cx="2366" cy="833.5" r="15" fill="url(#gKnob)"/><path d="M2349.6 839.5 A17.5 17.5 0 0 1 2357.2 818.3" stroke="#c8c8c8" stroke-width="2.2" fill="none"/><path d="M2360.4 835.6 L2355.7 837.3" stroke="#ddd" stroke-width="1.2"/><circle cx="2430.6" cy="833.5" r="18.5" fill="#111"/><circle cx="2430.6" cy="833.5" r="15" fill="url(#gKnob)"/><path d="M2430.6 816.0 A17.5 17.5 0 0 1 2444.0 822.3" stroke="#c8c8c8" stroke-width="2.2" fill="none"/><path d="M2435.2 829.6 L2439.0 826.4" stroke="#ddd" stroke-width="1.2"/><circle cx="2495.8" cy="833.5" r="18.5" fill="#111"/><circle cx="2495.8" cy="833.5" r="15" fill="url(#gKnob)"/><path d="M2480.6 842.2 A17.5 17.5 0 0 1 2501.8 817.1" stroke="#c8c8c8" stroke-width="2.2" fill="none"/><path d="M2497.9 827.9 L2499.6 823.2" stroke="#ddd" stroke-width="1.2"/><circle cx="2560.6" cy="833.5" r="18.5" fill="#111"/><circle cx="2560.6" cy="833.5" r="15" fill="url(#gKnob)"/><path d="M2556.4 837.7 L2552.8 841.3" stroke="#ddd" stroke-width="1.2"/><circle cx="2301" cy="923" r="18.5" fill="#111"/><circle cx="2301" cy="923" r="15" fill="url(#gKnob)"/><path d="M2301.0 917.0 L2301.0 912.0" stroke="#ddd" stroke-width="1.2"/><circle cx="2366" cy="923" r="18.5" fill="#111"/><circle cx="2366" cy="923" r="15" fill="url(#gKnob)"/><path d="M2366.0 917.0 L2366.0 912.0" stroke="#ddd" stroke-width="1.2"/><circle cx="2430.6" cy="923" r="18.5" fill="#111"/><circle cx="2430.6" cy="923" r="15" fill="url(#gKnob)"/><path d="M2430.6 917.0 L2430.6 912.0" stroke="#ddd" stroke-width="1.2"/><circle cx="2495.8" cy="923" r="18.5" fill="#111"/><circle cx="2495.8" cy="923" r="15" fill="url(#gKnob)"/><path d="M2480.6 931.8 A17.5 17.5 0 0 1 2508.2 910.6" stroke="#c8c8c8" stroke-width="2.2" fill="none"/><path d="M2500.0 918.8 L2503.6 915.2" stroke="#ddd" stroke-width="1.2"/><path d="M3413 1005 L3421 1013 M3421 1005 L3413 1013" stroke="#aaa" stroke-width="1"/></svg>
</body></html>
